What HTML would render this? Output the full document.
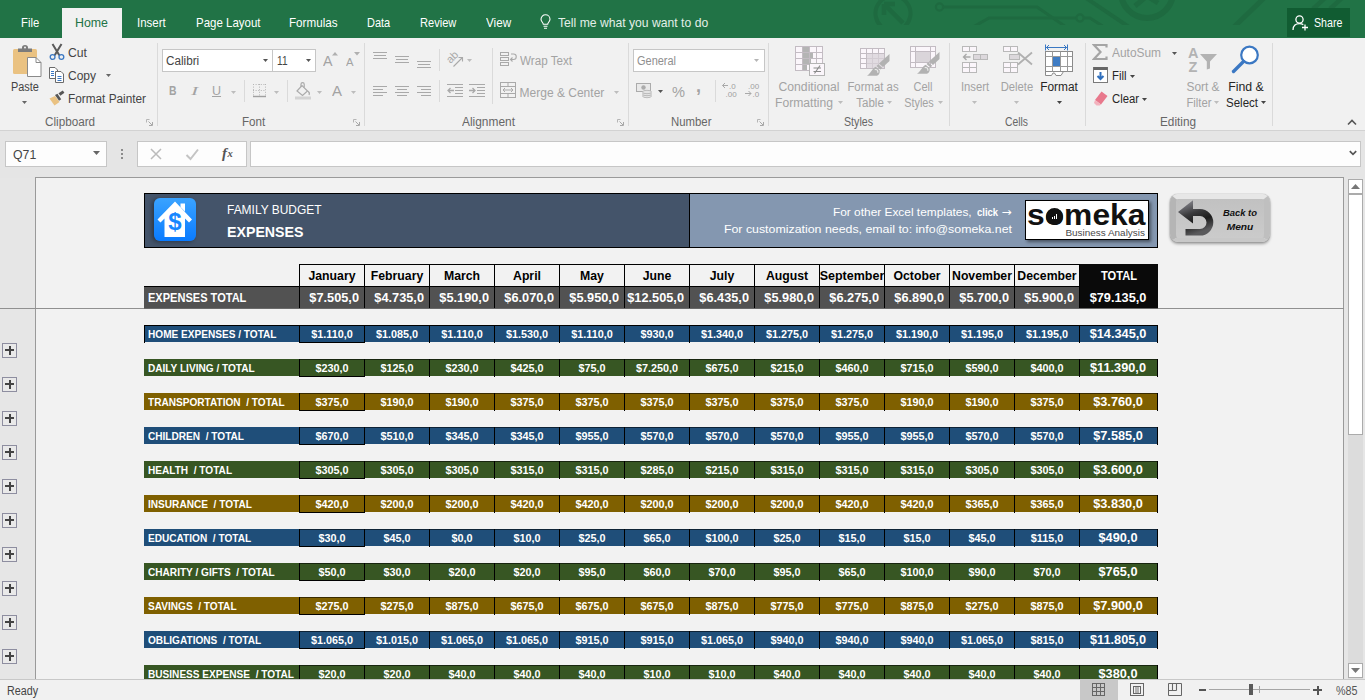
<!DOCTYPE html>
<html lang="en"><head><meta charset="utf-8"><title>Family Budget - Excel</title><style>
html,body{margin:0;padding:0}
body{width:1365px;height:700px;overflow:hidden;position:relative;background:#e6e6e6;font-family:"Liberation Sans",sans-serif;}
.a{position:absolute;box-sizing:border-box;display:block}
.t{position:absolute;white-space:pre;line-height:20px;}
</style></head><body>
<div class="a" style="left:0px;top:0px;width:1365px;height:38px;background:#217346;"></div>
<svg class="a" style="left:0;top:0" width="1365" height="25" viewBox="0 0 1365 25"><g fill="none" stroke="#1e6a40" stroke-width="3" stroke-linecap="butt">
<path d="M885 29 A17.5 17.5 0 1 1 901 29" stroke-width="4"/>
<path d="M903 23 L886 6 M884 4 v11 M884 4 h11" stroke-width="4.5"/>
<circle cx="939.5" cy="7" r="3.6" stroke-width="2.2"/>
<path d="M943.5 7 H1037 L1066 27"/>
<path d="M973 27 L989 18 H1076"/>
<circle cx="1080" cy="18" r="3.6" stroke-width="2.2"/>
<path d="M1084 18 H1090 L1104 27"/>
<path d="M1086 -2 L1129 27" stroke-width="4"/>
<circle cx="1147" cy="-8" r="26" stroke-width="6"/>
<path d="M1135 6 L1147 -4 L1158 3" stroke-width="5"/>
<path d="M1234 27 L1264 -2" stroke-width="5"/>
<path d="M1313 9 L1325 -2 M1330 9 L1342 -2" stroke-width="4.5"/>
</g></svg>
<div class="a" style="left:62px;top:8px;width:60px;height:30px;background:#f1f1f1;"></div>
<div class="t" style="top:13px;font-size:12.8px;color:#fff;left:21.1px;transform-origin:0 50%;transform:scaleX(0.882);">File</div>
<div class="t" style="top:13px;font-size:12.8px;color:#217346;left:75.2px;transform-origin:0 50%;transform:scaleX(0.966);">Home</div>
<div class="t" style="top:13px;font-size:12.8px;color:#fff;left:137px;transform-origin:0 50%;transform:scaleX(0.897);">Insert</div>
<div class="t" style="top:13px;font-size:12.8px;color:#fff;left:195.5px;transform-origin:0 50%;transform:scaleX(0.897);">Page Layout</div>
<div class="t" style="top:13px;font-size:12.8px;color:#fff;left:289.4px;transform-origin:0 50%;transform:scaleX(0.911);">Formulas</div>
<div class="t" style="top:13px;font-size:12.8px;color:#fff;left:367.4px;transform-origin:0 50%;transform:scaleX(0.858);">Data</div>
<div class="t" style="top:13px;font-size:12.8px;color:#fff;left:420.4px;transform-origin:0 50%;transform:scaleX(0.867);">Review</div>
<div class="t" style="top:13px;font-size:12.8px;color:#fff;left:486.1px;transform-origin:0 50%;transform:scaleX(0.912);">View</div>
<div class="t" style="top:13px;font-size:12.8px;color:#e3efe8;left:557.6px;transform-origin:0 50%;transform:scaleX(0.951);">Tell me what you want to do</div>
<svg class="a" style="left:539px;top:14px" width="13" height="16" viewBox="0 0 13 16"><g fill="none" stroke="#fff" stroke-width="1.1"><path d="M4.3 10.2 C4.3 8.6 2 7.6 2 5.2 A4.5 4.5 0 0 1 11 5.2 C11 7.6 8.7 8.6 8.7 10.2 Z"/><path d="M4.5 12.3 h4 M5 14.3 h3"/></g></svg>
<div class="a" style="left:1287px;top:8px;width:63px;height:29px;background:#115c32;"></div>
<svg class="a" style="left:1292px;top:14px" width="18" height="18" viewBox="0 0 18 18"><g fill="none" stroke="#fff" stroke-width="1.3"><circle cx="7.5" cy="5.5" r="3.6"/><path d="M1 16 C1 11.5 4 9.6 7.5 9.6 C9 9.6 10.3 10 11.3 10.6"/><path d="M13 10.5 v6 M10 13.5 h6"/></g></svg>
<div class="t" style="top:13px;font-size:12.8px;color:#fff;left:1313.6px;transform-origin:0 50%;transform:scaleX(0.831);">Share</div>
<div class="a" style="left:0px;top:38px;width:1365px;height:92px;background:#f1f1f1;"></div>
<div class="a" style="left:0px;top:130px;width:1365px;height:1px;background:#d2d2d2;"></div>
<div class="a" style="left:157px;top:43px;width:1px;height:83px;background:#dadada;"></div>
<div class="a" style="left:364px;top:43px;width:1px;height:83px;background:#dadada;"></div>
<div class="a" style="left:628px;top:43px;width:1px;height:83px;background:#dadada;"></div>
<div class="a" style="left:768px;top:43px;width:1px;height:83px;background:#dadada;"></div>
<div class="a" style="left:949px;top:43px;width:1px;height:83px;background:#dadada;"></div>
<div class="a" style="left:1085px;top:43px;width:1px;height:83px;background:#dadada;"></div>
<div class="a" style="left:1272px;top:43px;width:1px;height:83px;background:#dadada;"></div>
<svg class="a" style="left:12px;top:45px" width="30" height="32" viewBox="0 0 30 32"><rect x="1" y="4" width="24" height="25" rx="1.5" fill="#eac282"/>
<path d="M6 7V3.600H10V2.500A3 2.500 0 0 1 16 2.500V3.600H20V7Z" fill="#7b7b7b"/><circle cx="13" cy="2.600" r="1" fill="#f1f1f1"/>
<path d="M15.5 12.5H24L29 17.5V31.5H15.5Z" fill="#fff" stroke="#8a8a8a"/>
<path d="M24 12.5V17.5H29" fill="none" stroke="#8a8a8a"/></svg>
<div class="t" style="top:77px;font-size:12px;color:#444;left:11.4px;transform-origin:0 50%;transform:scaleX(0.909);">Paste</div>
<svg class="a" style="left:22.0px;top:101.0px" width="5" height="3" viewBox="0 0 5 3"><path d="M0 0H5L2.5 3Z" fill="#666"/></svg>
<svg class="a" style="left:48px;top:43px" width="18" height="18" viewBox="0 0 18 18"><g fill="none"><path d="M4.500 1L11.300 12.200M13.500 1L6.700 12.200" stroke="#5a5a5a" stroke-width="2"/>
<circle cx="4.6" cy="14" r="2.4" stroke="#3b78c3" stroke-width="1.3"/><circle cx="13.4" cy="14" r="2.4" stroke="#3b78c3" stroke-width="1.3"/></g></svg>
<div class="t" style="top:43px;font-size:12px;color:#444;left:68px;transform-origin:0 50%;transform:scaleX(1.017);">Cut</div>
<svg class="a" style="left:48px;top:66px" width="18" height="18" viewBox="0 0 18 18"><g fill="#fff" stroke="#6a6a6a"><path d="M1.5 1.5H7L9.5 4V12.5H1.5Z"/><path d="M7.5 5.5H13L15.5 8V16.5H7.5Z"/></g>
<g stroke="#3b78c3"><path d="M3 5.5h3M3 7.5h3M3 9.5h3M9.5 10.5h4M9.5 12.5h4M9.5 14.5h4"/></g></svg>
<div class="t" style="top:66px;font-size:12px;color:#444;left:68px;transform-origin:0 50%;">Copy</div>
<svg class="a" style="left:105.5px;top:74.0px" width="5" height="3" viewBox="0 0 5 3"><path d="M0 0H5L2.5 3Z" fill="#666"/></svg>
<svg class="a" style="left:48px;top:89px" width="18" height="18" viewBox="0 0 18 18"><path d="M1.5 9.5L7 7L11.5 13L6.5 16.5Z" fill="#eac282"/><path d="M7 6L9.5 4.8L13.2 10.2L11 11.8Z" fill="#555"/><path d="M10.5 4.2L14.8 1.6L16.4 3.8L12.4 6.8Z" fill="#555"/></svg>
<div class="t" style="top:89px;font-size:12px;color:#444;left:68px;transform-origin:0 50%;transform:scaleX(0.983);">Format Painter</div>
<div class="t" style="top:112px;font-size:12px;color:#666;left:45.4px;transform-origin:0 50%;transform:scaleX(0.975);">Clipboard</div>
<svg class="a" style="left:146px;top:119px" width="7" height="7" viewBox="0 0 7 7"><path d="M0.500 3.500V0.500H3.500" fill="none" stroke="#b5b5b5"/><path d="M2.500 2.500L6 6M6.500 3V6.500H3" fill="none" stroke="#a8a8a8" stroke-width="1"/></svg>
<div class="a" style="left:162px;top:49px;width:111px;height:23px;background:#fff;border:1px solid #c6c6c6;"></div>
<div class="a" style="left:272px;top:49px;width:44px;height:23px;background:#fff;border:1px solid #c6c6c6;"></div>
<div class="t" style="top:51px;font-size:12px;color:#444;left:165.5px;transform-origin:0 50%;transform:scaleX(0.976);">Calibri</div>
<svg class="a" style="left:262.8px;top:59.0px" width="5" height="3" viewBox="0 0 5 3"><path d="M0 0H5L2.5 3Z" fill="#555"/></svg>
<div class="t" style="top:51px;font-size:12px;color:#444;left:277px;transform-origin:0 50%;transform:scaleX(0.843);">11</div>
<svg class="a" style="left:305.9px;top:59.0px" width="5" height="3" viewBox="0 0 5 3"><path d="M0 0H5L2.5 3Z" fill="#555"/></svg>
<div class="t" style="top:51px;font-size:14px;color:#a3a3a3;left:322.5px;transform-origin:0 50%;transform:scaleX(1.017);">A</div>
<svg class="a" style="left:332px;top:52px" width="6" height="4" viewBox="0 0 6 4"><path d="M0 3.5H6L3 0Z" fill="#b0b0b0"/></svg>
<div class="t" style="top:52px;font-size:11.5px;color:#a3a3a3;left:345.5px;transform-origin:0 50%;transform:scaleX(0.978);">A</div>
<svg class="a" style="left:354px;top:52px" width="6" height="4" viewBox="0 0 6 4"><path d="M0 0H6L3 3.5Z" fill="#b0b0b0"/></svg>
<div class="t" style="top:81px;font-size:12.5px;color:#a3a3a3;font-weight:bold;left:168.5px;transform-origin:0 50%;transform:scaleX(0.831);">B</div>
<div class="t" style="top:81px;font-size:12.5px;color:#a3a3a3;font-style:italic;left:191px;transform-origin:0 50%;transform:scaleX(1.728);font-family:'Liberation Serif',serif;">I</div>
<div class="t" style="top:81px;font-size:12.5px;color:#a3a3a3;left:212px;transform-origin:0 50%;text-decoration:underline;">U</div>
<svg class="a" style="left:230.5px;top:90.5px" width="5" height="3" viewBox="0 0 5 3"><path d="M0 0H5L2.5 3Z" fill="#bdbdbd"/></svg>
<div class="a" style="left:244px;top:80px;width:1px;height:22px;background:#dadada;"></div>
<svg class="a" style="left:252px;top:83px" width="15" height="15" viewBox="0 0 15 15"><g stroke="#b5b5b5" stroke-dasharray="1 1.6" fill="none"><path d="M1 1.5h13M1 7.5h13M1.5 1v12M7.5 1v12M13.5 1v12"/></g><path d="M1 13.5h13" stroke="#a0a0a0" stroke-width="1.4"/></svg>
<svg class="a" style="left:273.5px;top:90.5px" width="5" height="3" viewBox="0 0 5 3"><path d="M0 0H5L2.5 3Z" fill="#bdbdbd"/></svg>
<div class="a" style="left:287px;top:80px;width:1px;height:22px;background:#dadada;"></div>
<svg class="a" style="left:294px;top:82px" width="18" height="18" viewBox="0 0 18 18"><g fill="none" stroke="#ababab" stroke-width="1.2"><path d="M3 9L8 3.5L13.5 9L8.5 13.5Z"/><path d="M7 5V2.2A1.6 1.6 0 0 1 10.2 2.2V5.5"/><path d="M13.5 9C15.5 10 15.5 12 15 13"/></g><rect x="1" y="14.5" width="16" height="3" fill="#d3d3d3"/></svg>
<svg class="a" style="left:316.5px;top:90.5px" width="5" height="3" viewBox="0 0 5 3"><path d="M0 0H5L2.5 3Z" fill="#bdbdbd"/></svg>
<div class="t" style="top:81px;font-size:14.5px;color:#a3a3a3;left:332px;transform-origin:0 50%;transform:scaleX(1.034);">A</div>
<svg class="a" style="left:350.5px;top:90.5px" width="5" height="3" viewBox="0 0 5 3"><path d="M0 0H5L2.5 3Z" fill="#bdbdbd"/></svg>
<div class="t" style="top:112px;font-size:12px;color:#666;left:241.5px;transform-origin:0 50%;transform:scaleX(0.970);">Font</div>
<svg class="a" style="left:353px;top:119px" width="7" height="7" viewBox="0 0 7 7"><path d="M0.500 3.500V0.500H3.500" fill="none" stroke="#b5b5b5"/><path d="M2.500 2.500L6 6M6.500 3V6.500H3" fill="none" stroke="#a8a8a8" stroke-width="1"/></svg>
<svg class="a" style="left:373px;top:52px" width="17" height="14" viewBox="0 0 17 14"><path d="M0 0.5H14" stroke="#a9a9a9"/><path d="M1 3.5H13" stroke="#a9a9a9"/><path d="M0 6.5H14" stroke="#a9a9a9"/></svg>
<svg class="a" style="left:395px;top:56px" width="17" height="14" viewBox="0 0 17 14"><path d="M0 0.5H14" stroke="#a9a9a9"/><path d="M1 3.5H13" stroke="#a9a9a9"/><path d="M0 6.5H14" stroke="#a9a9a9"/></svg>
<svg class="a" style="left:417px;top:61px" width="17" height="14" viewBox="0 0 17 14"><path d="M0 0.5H14" stroke="#a9a9a9"/><path d="M1 3.5H13" stroke="#a9a9a9"/><path d="M0 6.5H14" stroke="#a9a9a9"/></svg>
<div class="a" style="left:439px;top:49px;width:1px;height:22px;background:#dadada;"></div>
<svg class="a" style="left:444px;top:49px" width="22" height="20" viewBox="0 0 22 20"><path d="M9.500 17.500L18.500 8.500M14.500 8.500h4v4" fill="none" stroke="#a9a9a9" stroke-width="1.100"/><text x="0" y="0" font-size="11" fill="#a9a9a9" transform="translate(6.500 15) rotate(-45)" font-family="Liberation Sans,sans-serif">ab</text></svg>
<svg class="a" style="left:467.0px;top:59.0px" width="5" height="3" viewBox="0 0 5 3"><path d="M0 0H5L2.5 3Z" fill="#bdbdbd"/></svg>
<div class="a" style="left:492px;top:48px;width:1px;height:56px;background:#dadada;"></div>
<svg class="a" style="left:500px;top:51px" width="17" height="17" viewBox="0 0 17 17"><g fill="none" stroke="#a9a9a9"><rect x="0.5" y="1.500" width="8" height="3"/><rect x="0.5" y="6.500" width="8" height="3"/><rect x="0.5" y="11.500" width="8" height="3"/><path d="M11 3h2.500a2.500 2.500 0 0 1 0 5.500H10.500M12.500 6.500l-2 2 2 2" stroke-width="1.100"/></g></svg>
<div class="t" style="top:51px;font-size:12px;color:#a3a3a3;left:519.6px;transform-origin:0 50%;transform:scaleX(0.972);">Wrap Text</div>
<svg class="a" style="left:373px;top:86px" width="17" height="14" viewBox="0 0 17 14"><path d="M0 0.5H14" stroke="#a9a9a9"/><path d="M0 3.5H10" stroke="#a9a9a9"/><path d="M0 6.5H14" stroke="#a9a9a9"/><path d="M0 9.5H10" stroke="#a9a9a9"/></svg>
<svg class="a" style="left:395px;top:86px" width="17" height="14" viewBox="0 0 17 14"><path d="M0 0.5H14" stroke="#a9a9a9"/><path d="M2 3.5H12" stroke="#a9a9a9"/><path d="M0 6.5H14" stroke="#a9a9a9"/><path d="M2 9.5H12" stroke="#a9a9a9"/></svg>
<svg class="a" style="left:417px;top:86px" width="17" height="14" viewBox="0 0 17 14"><path d="M0 0.5H14" stroke="#a9a9a9"/><path d="M4 3.5H14" stroke="#a9a9a9"/><path d="M0 6.5H14" stroke="#a9a9a9"/><path d="M4 9.5H14" stroke="#a9a9a9"/></svg>
<div class="a" style="left:439px;top:80px;width:1px;height:22px;background:#dadada;"></div>
<svg class="a" style="left:447px;top:84px" width="17" height="14" viewBox="0 0 17 14"><path d="M0 0.5H16" stroke="#a9a9a9"/><path d="M8 3.5H16" stroke="#a9a9a9"/><path d="M8 6.5H16" stroke="#a9a9a9"/><path d="M8 9.5H16" stroke="#a9a9a9"/><path d="M0 12.5H16" stroke="#a9a9a9"/></svg>
<svg class="a" style="left:447px;top:87px" width="8" height="8" viewBox="0 0 8 8"><path d="M7 3.500H1M3.500 1L1 3.500L3.500 6" fill="none" stroke="#a9a9a9" stroke-width="1.300"/></svg>
<svg class="a" style="left:469px;top:84px" width="17" height="14" viewBox="0 0 17 14"><path d="M0 0.5H16" stroke="#a9a9a9"/><path d="M8 3.5H16" stroke="#a9a9a9"/><path d="M8 6.5H16" stroke="#a9a9a9"/><path d="M8 9.5H16" stroke="#a9a9a9"/><path d="M0 12.5H16" stroke="#a9a9a9"/></svg>
<svg class="a" style="left:469px;top:87px" width="8" height="8" viewBox="0 0 8 8"><path d="M0 3.500H6M3.500 1L6 3.500L3.500 6" fill="none" stroke="#a9a9a9" stroke-width="1.300"/></svg>
<svg class="a" style="left:500px;top:82px" width="17" height="17" viewBox="0 0 17 17"><g fill="none" stroke="#a9a9a9"><rect x="0.5" y="0.5" width="15" height="15"/><path d="M0.500 4.500H15.500M0.500 11.500H15.500M8 0.500V4.500M8 11.500V15.500M3 8H13M5 6L3 8L5 10M11 6L13 8L11 10"/></g></svg>
<div class="t" style="top:83px;font-size:12px;color:#a3a3a3;left:519.6px;transform-origin:0 50%;">Merge &amp; Center</div>
<svg class="a" style="left:614.0px;top:90.5px" width="5" height="3" viewBox="0 0 5 3"><path d="M0 0H5L2.5 3Z" fill="#bdbdbd"/></svg>
<div class="t" style="top:112px;font-size:12px;color:#666;left:462px;transform-origin:0 50%;transform:scaleX(0.993);">Alignment</div>
<svg class="a" style="left:617px;top:119px" width="7" height="7" viewBox="0 0 7 7"><path d="M0.500 3.500V0.500H3.500" fill="none" stroke="#b5b5b5"/><path d="M2.500 2.500L6 6M6.500 3V6.500H3" fill="none" stroke="#a8a8a8" stroke-width="1"/></svg>
<div class="a" style="left:633px;top:49px;width:132px;height:23px;background:#fff;border:1px solid #c6c6c6;"></div>
<div class="t" style="top:51px;font-size:12px;color:#8f8f8f;left:637px;transform-origin:0 50%;transform:scaleX(0.914);">General</div>
<svg class="a" style="left:753.5px;top:59.0px" width="5" height="3" viewBox="0 0 5 3"><path d="M0 0H5L2.5 3Z" fill="#b5b5b5"/></svg>
<svg class="a" style="left:635px;top:82px" width="19" height="17" viewBox="0 0 19 17"><rect x="1.5" y="1.500" width="14" height="8" fill="#e9e9e9" stroke="#ababab"/><circle cx="8.5" cy="5.5" r="2.2" fill="#ababab"/><g fill="#e4e4e4" stroke="#b0b0b0" stroke-width="0.8"><ellipse cx="12" cy="14" rx="4.5" ry="1.7"/><ellipse cx="12" cy="12" rx="4.5" ry="1.7"/><ellipse cx="12" cy="10" rx="4.5" ry="1.7"/></g></svg>
<svg class="a" style="left:657.5px;top:89.5px" width="5" height="3" viewBox="0 0 5 3"><path d="M0 0H5L2.5 3Z" fill="#555"/></svg>
<div class="t" style="top:82px;font-size:14px;color:#a3a3a3;left:672px;transform-origin:0 50%;transform:scaleX(1.044);">%</div>
<div class="t" style="top:76px;font-size:18px;color:#a3a3a3;font-weight:bold;left:696px;transform-origin:0 50%;">,</div>
<div class="a" style="left:715px;top:80px;width:1px;height:22px;background:#dadada;"></div>
<svg class="a" style="left:722px;top:82px" width="17" height="16" viewBox="0 0 17 16"><path d="M0.500 3.500H6M3 1L0.500 3.500L3 6" fill="none" stroke="#a9a9a9"/><text x="7" y="6.500" font-size="8" fill="#a0a0a0" font-family="Liberation Sans,sans-serif">.0</text><text x="3.500" y="14.500" font-size="8" fill="#a0a0a0" font-family="Liberation Sans,sans-serif">.00</text></svg>
<svg class="a" style="left:744px;top:82px" width="17" height="16" viewBox="0 0 17 16"><path d="M1 11.500H7M4.500 9L7 11.500L4.500 14" fill="none" stroke="#a9a9a9"/><text x="4" y="6.500" font-size="8" fill="#a0a0a0" font-family="Liberation Sans,sans-serif">.00</text><text x="8.500" y="14.500" font-size="8" fill="#a0a0a0" font-family="Liberation Sans,sans-serif">.0</text></svg>
<div class="t" style="top:112px;font-size:12px;color:#666;left:670.6px;transform-origin:0 50%;transform:scaleX(0.947);">Number</div>
<svg class="a" style="left:757px;top:119px" width="7" height="7" viewBox="0 0 7 7"><path d="M0.500 3.500V0.500H3.500" fill="none" stroke="#b5b5b5"/><path d="M2.500 2.500L6 6M6.500 3V6.500H3" fill="none" stroke="#a8a8a8" stroke-width="1"/></svg>
<svg class="a" style="left:795px;top:46px" width="32" height="32" viewBox="0 0 32 32"><rect x="0.5" y="0.5" width="27" height="24" fill="#fbf6fb" stroke="#c3bcc3"/><rect x="7" y="1" width="7" height="6" fill="#b4b4b4"/><rect x="7" y="7" width="11" height="6" fill="#b4b4b4"/><rect x="7" y="13" width="9" height="6" fill="#b4b4b4"/><rect x="7" y="19" width="5" height="5" fill="#b4b4b4"/><path d="M7.5 0.5v24" stroke="#c3bcc3"/><path d="M14.5 0.5v24" stroke="#c3bcc3"/><path d="M21.5 0.5v24" stroke="#c3bcc3"/><path d="M0.5 6.5h27" stroke="#c3bcc3"/><path d="M0.5 12.5h27" stroke="#c3bcc3"/><path d="M0.5 18.5h27" stroke="#c3bcc3"/><rect x="14.500" y="17.500" width="15" height="12" fill="#fbf6fb" stroke="#b4b4b4"/><path d="M18.500 22h7.500M18.500 25.500h7.500M25 19.500L19.500 27.500" stroke="#8a8a8a" stroke-width="1.100" fill="none"/></svg>
<div class="t" style="top:77px;font-size:12px;color:#a3a3a3;left:609.1px;width:400px;text-align:center;transform-origin:50% 50%;transform:scaleX(1.016);">Conditional</div>
<div class="t" style="top:93px;font-size:12px;color:#a3a3a3;left:604.4px;width:400px;text-align:center;transform-origin:50% 50%;transform:scaleX(1.011);">Formatting</div>
<svg class="a" style="left:838.0px;top:101.0px" width="5" height="3" viewBox="0 0 5 3"><path d="M0 0H5L2.5 3Z" fill="#bdbdbd"/></svg>
<svg class="a" style="left:860px;top:46px" width="34" height="32" viewBox="0 0 34 32"><rect x="0.5" y="2.5" width="24" height="20" fill="#fbf6fb" stroke="#c3bcc3"/><path d="M6.5 2.5v20" stroke="#c3bcc3"/><path d="M12.5 2.5v20" stroke="#c3bcc3"/><path d="M18.5 2.5v20" stroke="#c3bcc3"/><path d="M0.5 7.5h24" stroke="#c3bcc3"/><path d="M0.5 12.5h24" stroke="#c3bcc3"/><path d="M0.5 17.5h24" stroke="#c3bcc3"/><rect x="7" y="8" width="17" height="14" fill="#d8d2d8" opacity="0.75"/><g transform="translate(29.5 8)" fill="#b2b2b2"><path d="M0 0L0 7L-6.500 13L-10.500 9.500Z"/><path d="M-11.300 10.300L-7.300 13.800L-9 15.500L-13 12Z"/><path d="M-13.800 12.800L-9.800 16.300C-9.500 19 -10.500 21 -12.500 21.800L-22.500 21.800C-18.500 19.500 -17.500 14.500 -13.800 12.800Z"/><path d="M-14.800 15.800C-12.800 14.800 -11 16.800 -11.800 18.800" stroke="#ececec" stroke-width="1.200" fill="none"/></g></svg>
<div class="t" style="top:77px;font-size:12px;color:#a3a3a3;left:673px;width:400px;text-align:center;transform-origin:50% 50%;transform:scaleX(0.948);">Format as</div>
<div class="t" style="top:93px;font-size:12px;color:#a3a3a3;left:670.2px;width:400px;text-align:center;transform-origin:50% 50%;transform:scaleX(0.962);">Table</div>
<svg class="a" style="left:887.0px;top:101.0px" width="5" height="3" viewBox="0 0 5 3"><path d="M0 0H5L2.5 3Z" fill="#bdbdbd"/></svg>
<svg class="a" style="left:910px;top:46px" width="34" height="32" viewBox="0 0 34 32"><rect x="0.5" y="0.5" width="25" height="21" fill="#fbf6fb" stroke="#c3bcc3"/><path d="M5.5 0.5v21" stroke="#c3bcc3"/><path d="M20.5 0.5v21" stroke="#c3bcc3"/><path d="M0.5 5.5h25" stroke="#c3bcc3"/><path d="M0.5 16.5h25" stroke="#c3bcc3"/><rect x="6" y="6" width="14" height="10" fill="#dad5da"/><g transform="translate(29.5 6)" fill="#b2b2b2"><path d="M0 0L0 7L-6.500 13L-10.500 9.500Z"/><path d="M-11.300 10.300L-7.300 13.800L-9 15.500L-13 12Z"/><path d="M-13.800 12.800L-9.800 16.300C-9.500 19 -10.500 21 -12.500 21.800L-22.500 21.800C-18.500 19.500 -17.500 14.500 -13.800 12.800Z"/><path d="M-14.800 15.800C-12.800 14.800 -11 16.800 -11.800 18.800" stroke="#ececec" stroke-width="1.200" fill="none"/></g></svg>
<div class="t" style="top:77px;font-size:12px;color:#a3a3a3;left:723px;width:400px;text-align:center;transform-origin:50% 50%;transform:scaleX(0.919);">Cell</div>
<div class="t" style="top:93px;font-size:12px;color:#a3a3a3;left:719px;width:400px;text-align:center;transform-origin:50% 50%;transform:scaleX(0.906);">Styles</div>
<svg class="a" style="left:938.0px;top:101.0px" width="5" height="3" viewBox="0 0 5 3"><path d="M0 0H5L2.5 3Z" fill="#bdbdbd"/></svg>
<div class="t" style="top:112px;font-size:12px;color:#666;left:844px;transform-origin:0 50%;transform:scaleX(0.887);">Styles</div>
<svg class="a" style="left:962px;top:46px" width="28" height="28" viewBox="0 0 28 28"><g fill="#fbf6fb" stroke="#b9b9b9"><rect x="0.5" y="0.5" width="7" height="5"/><rect x="7.5" y="0.5" width="7" height="5"/><rect x="11.500" y="8.500" width="7" height="5" fill="#dcd8dc"/><rect x="18.500" y="8.500" width="7" height="5" fill="#dcd8dc"/><rect x="0.5" y="16.500" width="7" height="5"/><rect x="7.5" y="16.500" width="7" height="5"/><rect x="0.5" y="21.500" width="7" height="5"/><rect x="7.5" y="21.500" width="7" height="5"/></g><path d="M8.500 11H1.500M4.500 8L1.500 11L4.500 14" fill="none" stroke="#a9a9a9" stroke-width="1.400"/></svg>
<div class="t" style="top:77px;font-size:12px;color:#a3a3a3;left:774.5px;width:400px;text-align:center;transform-origin:50% 50%;transform:scaleX(0.940);">Insert</div>
<svg class="a" style="left:972.0px;top:101.0px" width="5" height="3" viewBox="0 0 5 3"><path d="M0 0H5L2.5 3Z" fill="#bdbdbd"/></svg>
<svg class="a" style="left:1002px;top:46px" width="32" height="28" viewBox="0 0 32 28"><g fill="#fbf6fb" stroke="#b9b9b9"><rect x="1.500" y="0.500" width="7" height="5"/><rect x="8.500" y="0.500" width="7" height="5"/><rect x="7.500" y="8.500" width="10" height="5" fill="#dcd8dc"/><rect x="1.500" y="16.500" width="7" height="5"/><rect x="8.500" y="16.500" width="7" height="5"/><rect x="1.500" y="21.500" width="7" height="5"/><rect x="8.500" y="21.500" width="7" height="5"/></g><path d="M16 6.500L30 18.500M30 6.500L16 18.500" fill="none" stroke="#b0b0b0" stroke-width="1.800"/></svg>
<div class="t" style="top:77px;font-size:12px;color:#a3a3a3;left:816.7px;width:400px;text-align:center;transform-origin:50% 50%;transform:scaleX(0.937);">Delete</div>
<svg class="a" style="left:1014.0px;top:101.0px" width="5" height="3" viewBox="0 0 5 3"><path d="M0 0H5L2.5 3Z" fill="#bdbdbd"/></svg>
<svg class="a" style="left:1044px;top:44px" width="32" height="32" viewBox="0 0 32 32"><g fill="none" stroke="#3b78c3" stroke-width="1"><path d="M2 3.500H23M1.500 0.500V6.500M23.500 0.500V6.500M5 1L2.500 3.500L5 6M20 1L22.500 3.500L20 6"/></g><path d="M1.500 27.500V31.500H7.500L9 29H10.500L12 31.500H17L19.500 27.500Z" fill="#fff" stroke="#8a8a8a"/><rect x="1.500" y="7.500" width="27" height="20" fill="#fff" stroke="#8a8a8a"/><g stroke="#9a9a9a" fill="none"><path d="M8.500 7.500V27.500M16.500 7.500V27.500M23.500 7.500V27.500M1.500 12.500H28.500M1.500 22.500H28.500"/></g><rect x="9" y="13" width="7" height="9" fill="#3e7cc4"/></svg>
<div class="t" style="top:77px;font-size:12px;color:#262626;left:859.2px;width:400px;text-align:center;transform-origin:50% 50%;transform:scaleX(0.989);">Format</div>
<svg class="a" style="left:1057.0px;top:101.0px" width="5" height="3" viewBox="0 0 5 3"><path d="M0 0H5L2.5 3Z" fill="#444"/></svg>
<div class="t" style="top:112px;font-size:12px;color:#666;left:1005px;transform-origin:0 50%;transform:scaleX(0.862);">Cells</div>
<svg class="a" style="left:1092px;top:43px" width="18" height="18" viewBox="0 0 18 18"><path d="M14.500 4.500V2H2L8.500 9L2 16H14.500V13.500" fill="none" stroke="#a5a5a5" stroke-width="2.200"/></svg>
<div class="t" style="top:43px;font-size:12px;color:#a3a3a3;left:1111.9px;transform-origin:0 50%;transform:scaleX(0.993);">AutoSum</div>
<svg class="a" style="left:1171.5px;top:51.5px" width="5" height="3" viewBox="0 0 5 3"><path d="M0 0H5L2.5 3Z" fill="#555"/></svg>
<svg class="a" style="left:1093px;top:66px" width="16" height="18" viewBox="0 0 16 18"><rect x="0.5" y="1.500" width="14" height="15" fill="#fff" stroke="#7a7a7a"/><rect x="0.5" y="1" width="14" height="3" fill="#666"/><path d="M7.500 6V13M4.500 10L7.500 13L10.500 10" fill="none" stroke="#2f6fbd" stroke-width="2"/></svg>
<div class="t" style="top:66px;font-size:12px;color:#262626;left:1112px;transform-origin:0 50%;transform:scaleX(0.946);">Fill</div>
<svg class="a" style="left:1130.0px;top:74.5px" width="5" height="3" viewBox="0 0 5 3"><path d="M0 0H5L2.5 3Z" fill="#444"/></svg>
<svg class="a" style="left:1093px;top:90px" width="17" height="16" viewBox="0 0 17 16"><path d="M8.500 1.500L14.500 6L8 14.500L2 10Z" fill="#e8788c"/><path d="M2 10L8 14.500L6.800 15.500H3.500L1 13Z" fill="#f3b2bd"/></svg>
<div class="t" style="top:89px;font-size:12px;color:#262626;left:1112px;transform-origin:0 50%;transform:scaleX(0.942);">Clear</div>
<svg class="a" style="left:1142.0px;top:97.5px" width="5" height="3" viewBox="0 0 5 3"><path d="M0 0H5L2.5 3Z" fill="#444"/></svg>
<svg class="a" style="left:1187px;top:45px" width="32" height="30" viewBox="0 0 32 30"><text x="1" y="13" font-size="14.500" font-weight="bold" fill="#b3b3b3" font-family="Liberation Sans,sans-serif">A</text><text x="1.500" y="27" font-size="14.500" font-weight="bold" fill="#b3b3b3" font-family="Liberation Sans,sans-serif">Z</text><path d="M13 9H30L23 16.500V23.500L19.800 24.500V16.500Z" fill="#b3b3b3"/></svg>
<div class="t" style="top:77px;font-size:12px;color:#a3a3a3;left:1002.5px;width:400px;text-align:center;transform-origin:50% 50%;transform:scaleX(0.990);">Sort &amp;</div>
<div class="t" style="top:93px;font-size:12px;color:#a3a3a3;left:998.5px;width:400px;text-align:center;transform-origin:50% 50%;transform:scaleX(0.938);">Filter</div>
<svg class="a" style="left:1214.0px;top:101.0px" width="5" height="3" viewBox="0 0 5 3"><path d="M0 0H5L2.5 3Z" fill="#bdbdbd"/></svg>
<svg class="a" style="left:1230px;top:44px" width="32" height="32" viewBox="0 0 32 32"><circle cx="19.500" cy="11" r="8.300" fill="#fff" stroke="#3b78c3" stroke-width="2.200"/><path d="M13.500 17.500L3.500 27.500" stroke="#3b78c3" stroke-width="3.400" stroke-linecap="round"/></svg>
<div class="t" style="top:77px;font-size:12px;color:#262626;left:1046.2px;width:400px;text-align:center;transform-origin:50% 50%;transform:scaleX(1.026);">Find &amp;</div>
<div class="t" style="top:93px;font-size:12px;color:#262626;left:1042px;width:400px;text-align:center;transform-origin:50% 50%;transform:scaleX(0.959);">Select</div>
<svg class="a" style="left:1261.0px;top:101.0px" width="5" height="3" viewBox="0 0 5 3"><path d="M0 0H5L2.5 3Z" fill="#444"/></svg>
<div class="t" style="top:112px;font-size:12px;color:#666;left:1160px;transform-origin:0 50%;transform:scaleX(0.981);">Editing</div>
<svg class="a" style="left:1346.5px;top:118.5px" width="10" height="7" viewBox="0 0 10 7"><path d="M1 5.500L5 1.500L9 5.500" fill="none" stroke="#555" stroke-width="1.600"/></svg>
<div class="a" style="left:0px;top:131px;width:1365px;height:47px;background:#e5e5e5;"></div>
<div class="a" style="left:5px;top:141px;width:102px;height:26px;background:#fdfdfd;border:1px solid #c6c6c6;"></div>
<div class="t" style="top:145px;font-size:12px;color:#444;left:12.5px;transform-origin:0 50%;transform:scaleX(1.023);">Q71</div>
<svg class="a" style="left:93.0px;top:151.0px" width="7" height="4" viewBox="0 0 7 4"><path d="M0 0H7L3.5 4Z" fill="#666"/></svg>
<div class="a" style="left:121px;top:149px;width:2px;height:2px;background:#8c8c8c;"></div>
<div class="a" style="left:121px;top:153px;width:2px;height:2px;background:#8c8c8c;"></div>
<div class="a" style="left:121px;top:157px;width:2px;height:2px;background:#8c8c8c;"></div>
<div class="a" style="left:137px;top:141px;width:110px;height:26px;background:#fdfdfd;border:1px solid #c6c6c6;"></div>
<svg class="a" style="left:150px;top:148px" width="12" height="12" viewBox="0 0 12 12"><path d="M1 1L11 11M11 1L1 11" stroke="#bbb" stroke-width="1.500" fill="none"/></svg>
<svg class="a" style="left:185px;top:148px" width="15" height="13" viewBox="0 0 15 13"><path d="M1.500 7L5.500 11L13 1.500" stroke="#c4c4c4" stroke-width="2" fill="none"/></svg>
<div class="t" style="top:143px;font-size:15px;color:#555;font-weight:bold;font-style:italic;left:222px;transform-origin:0 50%;font-family:'Liberation Serif',serif;">f</div>
<div class="t" style="top:144px;font-size:10.5px;color:#555;font-weight:bold;font-style:italic;left:227.5px;transform-origin:0 50%;font-family:'Liberation Serif',serif;">x</div>
<div class="a" style="left:250px;top:141px;width:1111px;height:26px;background:#fdfdfd;border:1px solid #c6c6c6;"></div>
<svg class="a" style="left:1349px;top:150px" width="8" height="6" viewBox="0 0 8 6"><path d="M0.800 1.200L4 4.400L7.200 1.200" fill="none" stroke="#555" stroke-width="1.700"/></svg>
<div class="a" style="left:36px;top:178px;width:1307px;height:501px;background:#f2f2f2;"></div>
<div class="a" style="left:35px;top:177px;width:1309px;height:1px;background:#9a9a9a;"></div>
<div class="a" style="left:35px;top:177px;width:1px;height:502px;background:#9a9a9a;"></div>
<div class="a" style="left:1343px;top:177px;width:1px;height:502px;background:#9a9a9a;"></div>
<div class="a" style="left:0px;top:308px;width:1344px;height:1px;background:#909090;"></div>
<div class="a" style="left:2px;top:343px;width:15px;height:15px;background:#e9e9e9;border:1px solid #8e8ea0;"></div>
<div class="a" style="left:5px;top:349px;width:9px;height:2px;background:#444;"></div>
<div class="a" style="left:8.5px;top:346px;width:2px;height:9px;background:#444;"></div>
<div class="a" style="left:2px;top:377px;width:15px;height:15px;background:#e9e9e9;border:1px solid #8e8ea0;"></div>
<div class="a" style="left:5px;top:383px;width:9px;height:2px;background:#444;"></div>
<div class="a" style="left:8.5px;top:380px;width:2px;height:9px;background:#444;"></div>
<div class="a" style="left:2px;top:411px;width:15px;height:15px;background:#e9e9e9;border:1px solid #8e8ea0;"></div>
<div class="a" style="left:5px;top:417px;width:9px;height:2px;background:#444;"></div>
<div class="a" style="left:8.5px;top:414px;width:2px;height:9px;background:#444;"></div>
<div class="a" style="left:2px;top:445px;width:15px;height:15px;background:#e9e9e9;border:1px solid #8e8ea0;"></div>
<div class="a" style="left:5px;top:451px;width:9px;height:2px;background:#444;"></div>
<div class="a" style="left:8.5px;top:448px;width:2px;height:9px;background:#444;"></div>
<div class="a" style="left:2px;top:479px;width:15px;height:15px;background:#e9e9e9;border:1px solid #8e8ea0;"></div>
<div class="a" style="left:5px;top:485px;width:9px;height:2px;background:#444;"></div>
<div class="a" style="left:8.5px;top:482px;width:2px;height:9px;background:#444;"></div>
<div class="a" style="left:2px;top:513px;width:15px;height:15px;background:#e9e9e9;border:1px solid #8e8ea0;"></div>
<div class="a" style="left:5px;top:519px;width:9px;height:2px;background:#444;"></div>
<div class="a" style="left:8.5px;top:516px;width:2px;height:9px;background:#444;"></div>
<div class="a" style="left:2px;top:547px;width:15px;height:15px;background:#e9e9e9;border:1px solid #8e8ea0;"></div>
<div class="a" style="left:5px;top:553px;width:9px;height:2px;background:#444;"></div>
<div class="a" style="left:8.5px;top:550px;width:2px;height:9px;background:#444;"></div>
<div class="a" style="left:2px;top:581px;width:15px;height:15px;background:#e9e9e9;border:1px solid #8e8ea0;"></div>
<div class="a" style="left:5px;top:587px;width:9px;height:2px;background:#444;"></div>
<div class="a" style="left:8.5px;top:584px;width:2px;height:9px;background:#444;"></div>
<div class="a" style="left:2px;top:615px;width:15px;height:15px;background:#e9e9e9;border:1px solid #8e8ea0;"></div>
<div class="a" style="left:5px;top:621px;width:9px;height:2px;background:#444;"></div>
<div class="a" style="left:8.5px;top:618px;width:2px;height:9px;background:#444;"></div>
<div class="a" style="left:2px;top:649px;width:15px;height:15px;background:#e9e9e9;border:1px solid #8e8ea0;"></div>
<div class="a" style="left:5px;top:655px;width:9px;height:2px;background:#444;"></div>
<div class="a" style="left:8.5px;top:652px;width:2px;height:9px;background:#444;"></div>
<div class="a" style="left:1348px;top:179px;width:15px;height:500px;background:#dcdcdc;"></div>
<div class="a" style="left:1348px;top:179px;width:15px;height:15px;background:#fff;border:1px solid #ababab;"></div>
<svg class="a" style="left:1351px;top:184px" width="9" height="5" viewBox="0 0 9 5"><path d="M0 5H9L4.500 0Z" fill="#777"/></svg>
<div class="a" style="left:1348px;top:194px;width:15px;height:241px;background:#fff;border:1px solid #ababab;"></div>
<div class="a" style="left:1348px;top:663px;width:15px;height:15px;background:#fff;border:1px solid #ababab;"></div>
<svg class="a" style="left:1351px;top:668px" width="9" height="5" viewBox="0 0 9 5"><path d="M0 0H9L4.500 5Z" fill="#777"/></svg>
<div class="a" style="left:144px;top:193px;width:1014px;height:55px;background:#44546a;border:1px solid #000;"></div>
<div class="a" style="left:689px;top:194px;width:468px;height:53px;background:#8497b0;"></div>
<div class="a" style="left:689px;top:194px;width:1px;height:53px;background:#000;"></div>
<div class="a" style="left:154px;top:198px;width:42px;height:43px;border-radius:6px;background:linear-gradient(#3aa3ff,#0a7bff);box-shadow:-2px 1px 4px rgba(0,0,0,.35)"></div>
<svg class="a" style="left:154px;top:198px" width="42" height="43" viewBox="0 0 42 43"><path d="M21 3.500L38 21.500L35 24.500L31 20.500V39H10.500V20.500L6.500 24.500L3.500 21.500Z M26.500 5.500H31V13.500L26.500 9Z" fill="#fff"/><text x="21" y="32" font-size="24" font-weight="bold" text-anchor="middle" fill="#1787ff" font-family="Liberation Sans,sans-serif">$</text></svg>
<div class="t" style="top:200px;font-size:12.5px;color:#fff;left:227.4px;transform-origin:0 50%;transform:scaleX(0.956);">FAMILY BUDGET</div>
<div class="t" style="top:222px;font-size:15px;color:#fff;font-weight:bold;left:227.4px;transform-origin:0 50%;transform:scaleX(0.946);">EXPENSES</div>
<div class="t" style="top:202px;font-size:11.5px;color:#fff;left:832.5px;transform-origin:0 50%;transform:scaleX(1.033);">For other Excel templates, </div>
<div class="t" style="top:202px;font-size:11.5px;color:#fff;font-weight:bold;left:976.5px;transform-origin:0 50%;transform:scaleX(0.825);">click</div>
<div class="t" style="top:202px;font-size:12px;color:#fff;left:1001.5px;transform-origin:0 50%;font-family:'DejaVu Sans',sans-serif;">→</div>
<div class="t" style="top:219px;font-size:11.5px;color:#fff;left:611.8px;width:400px;text-align:right;transform-origin:100% 50%;transform:scaleX(1.075);">For customization needs, email to: info@someka.net</div>
<div class="a" style="left:1025px;top:200px;width:124px;height:40px;background:#fff;border:1px solid #000;box-shadow:2px 2px 3px rgba(0,0,0,.45)"></div>
<div class="t" style="top:205px;font-size:30px;color:#111;font-weight:bold;left:1027.4px;transform-origin:0 50%;transform:scaleX(1.060);">someka</div>
<div class="a" style="left:1046px;top:208px;width:17px;height:17px;border-radius:50%;background:#111"></div>
<div class="a" style="left:1052px;top:217px;width:1px;height:2px;background:#fff;"></div>
<div class="a" style="left:1054px;top:216px;width:1px;height:3px;background:#fff;"></div>
<div class="a" style="left:1056px;top:214px;width:1px;height:5px;background:#fff;"></div>
<div class="t" style="top:223px;font-size:9.5px;color:#4a4a4a;left:745.4000000000001px;width:400px;text-align:right;transform-origin:100% 50%;transform:scaleX(1.047);">Business Analysis</div>
<div class="a" style="left:1170px;top:194px;width:100px;height:48px;border-radius:8px;border-style:solid;border-width:5px 6px 4px 6px;border-color:#e7e7e7 #bfbfbf #c8c8c8 #b5b5b5;background:linear-gradient(#c1c1c1,#cbcbcb);box-shadow:0 2px 3px rgba(0,0,0,.35),0 0 1px rgba(0,0,0,.55)"></div>
<svg class="a" style="left:1176px;top:198px" width="40" height="40" viewBox="0 0 40 40"><defs><linearGradient id="ag" x1="0" y1="0" x2="0.35" y2="1"><stop offset="0" stop-color="#9a9aa2"/><stop offset="0.45" stop-color="#3a3a3c"/><stop offset="0.7" stop-color="#1c1c1c"/><stop offset="1" stop-color="#5a5a5c"/></linearGradient></defs><path d="M2 14L17 2.300V11H24A13.300 13.300 0 0 1 24 37.600H9.500V31H24A6.500 6.500 0 0 0 24 18H17V25.500Z" fill="url(#ag)"/></svg>
<div class="t" style="top:203px;font-size:9.5px;color:#111;font-weight:bold;font-style:italic;left:1040.2px;width:400px;text-align:center;transform-origin:50% 50%;transform:scaleX(0.991);">Back to</div>
<div class="t" style="top:217px;font-size:9.5px;color:#111;font-weight:bold;font-style:italic;left:1040.3px;width:400px;text-align:center;transform-origin:50% 50%;transform:scaleX(1.076);">Menu</div>
<div class="a" style="left:299px;top:264px;width:781px;height:1px;background:#000;"></div>
<div class="a" style="left:144px;top:286px;width:1014px;height:1px;background:#000;"></div>
<div class="a" style="left:1079px;top:264px;width:79px;height:44px;background:#0a0a0a;"></div>
<div class="a" style="left:299px;top:264px;width:1px;height:23px;background:#000;"></div>
<div class="a" style="left:364px;top:264px;width:1px;height:23px;background:#000;"></div>
<div class="a" style="left:429px;top:264px;width:1px;height:23px;background:#000;"></div>
<div class="a" style="left:494px;top:264px;width:1px;height:23px;background:#000;"></div>
<div class="a" style="left:559px;top:264px;width:1px;height:23px;background:#000;"></div>
<div class="a" style="left:624px;top:264px;width:1px;height:23px;background:#000;"></div>
<div class="a" style="left:689px;top:264px;width:1px;height:23px;background:#000;"></div>
<div class="a" style="left:754px;top:264px;width:1px;height:23px;background:#000;"></div>
<div class="a" style="left:819px;top:264px;width:1px;height:23px;background:#000;"></div>
<div class="a" style="left:884px;top:264px;width:1px;height:23px;background:#000;"></div>
<div class="a" style="left:949px;top:264px;width:1px;height:23px;background:#000;"></div>
<div class="a" style="left:1014px;top:264px;width:1px;height:23px;background:#000;"></div>
<div class="a" style="left:1079px;top:264px;width:1px;height:23px;background:#000;"></div>
<div class="t" style="top:266px;font-size:12.5px;color:#000;font-weight:bold;left:132px;width:400px;text-align:center;transform-origin:50% 50%;transform:scaleX(0.980);">January</div>
<div class="t" style="top:266px;font-size:12.5px;color:#000;font-weight:bold;left:197px;width:400px;text-align:center;transform-origin:50% 50%;transform:scaleX(0.980);">February</div>
<div class="t" style="top:266px;font-size:12.5px;color:#000;font-weight:bold;left:262px;width:400px;text-align:center;transform-origin:50% 50%;transform:scaleX(0.980);">March</div>
<div class="t" style="top:266px;font-size:12.5px;color:#000;font-weight:bold;left:327px;width:400px;text-align:center;transform-origin:50% 50%;transform:scaleX(0.980);">April</div>
<div class="t" style="top:266px;font-size:12.5px;color:#000;font-weight:bold;left:392px;width:400px;text-align:center;transform-origin:50% 50%;transform:scaleX(0.980);">May</div>
<div class="t" style="top:266px;font-size:12.5px;color:#000;font-weight:bold;left:457px;width:400px;text-align:center;transform-origin:50% 50%;transform:scaleX(0.980);">June</div>
<div class="t" style="top:266px;font-size:12.5px;color:#000;font-weight:bold;left:522px;width:400px;text-align:center;transform-origin:50% 50%;transform:scaleX(0.980);">July</div>
<div class="t" style="top:266px;font-size:12.5px;color:#000;font-weight:bold;left:587px;width:400px;text-align:center;transform-origin:50% 50%;transform:scaleX(0.980);">August</div>
<div class="t" style="top:266px;font-size:12.5px;color:#000;font-weight:bold;left:652px;width:400px;text-align:center;transform-origin:50% 50%;">September</div>
<div class="t" style="top:266px;font-size:12.5px;color:#000;font-weight:bold;left:717px;width:400px;text-align:center;transform-origin:50% 50%;transform:scaleX(0.980);">October</div>
<div class="t" style="top:266px;font-size:12.5px;color:#000;font-weight:bold;left:782px;width:400px;text-align:center;transform-origin:50% 50%;transform:scaleX(0.980);">November</div>
<div class="t" style="top:266px;font-size:12.5px;color:#000;font-weight:bold;left:847px;width:400px;text-align:center;transform-origin:50% 50%;transform:scaleX(0.980);">December</div>
<div class="t" style="top:266px;font-size:12.5px;color:#fff;font-weight:bold;left:918.7px;width:400px;text-align:center;transform-origin:50% 50%;transform:scaleX(0.890);">TOTAL</div>
<div class="a" style="left:144px;top:287px;width:935px;height:21px;background:#525252;"></div>
<div class="a" style="left:299px;top:287px;width:1px;height:21px;background:#000;"></div>
<div class="a" style="left:364px;top:287px;width:1px;height:21px;background:#000;"></div>
<div class="a" style="left:429px;top:287px;width:1px;height:21px;background:#000;"></div>
<div class="a" style="left:494px;top:287px;width:1px;height:21px;background:#000;"></div>
<div class="a" style="left:559px;top:287px;width:1px;height:21px;background:#000;"></div>
<div class="a" style="left:624px;top:287px;width:1px;height:21px;background:#000;"></div>
<div class="a" style="left:689px;top:287px;width:1px;height:21px;background:#000;"></div>
<div class="a" style="left:754px;top:287px;width:1px;height:21px;background:#000;"></div>
<div class="a" style="left:819px;top:287px;width:1px;height:21px;background:#000;"></div>
<div class="a" style="left:884px;top:287px;width:1px;height:21px;background:#000;"></div>
<div class="a" style="left:949px;top:287px;width:1px;height:21px;background:#000;"></div>
<div class="a" style="left:1014px;top:287px;width:1px;height:21px;background:#000;"></div>
<div class="a" style="left:1079px;top:287px;width:1px;height:21px;background:#000;"></div>
<div class="a" style="left:144px;top:308px;width:1014px;height:1px;background:#6a6a6a;"></div>
<div class="t" style="top:288px;font-size:12px;color:#fff;font-weight:bold;left:147.7px;transform-origin:0 50%;transform:scaleX(0.920);">EXPENSES TOTAL</div>
<div class="t" style="top:288px;font-size:12.5px;color:#fff;font-weight:bold;left:-41.30000000000001px;width:400px;text-align:right;transform-origin:100% 50%;transform:scaleX(1.020);">$7.505,0</div>
<div class="t" style="top:288px;font-size:12.5px;color:#fff;font-weight:bold;left:23.69999999999999px;width:400px;text-align:right;transform-origin:100% 50%;transform:scaleX(1.020);">$4.735,0</div>
<div class="t" style="top:288px;font-size:12.5px;color:#fff;font-weight:bold;left:88.69999999999999px;width:400px;text-align:right;transform-origin:100% 50%;transform:scaleX(1.020);">$5.190,0</div>
<div class="t" style="top:288px;font-size:12.5px;color:#fff;font-weight:bold;left:153.70000000000005px;width:400px;text-align:right;transform-origin:100% 50%;transform:scaleX(1.020);">$6.070,0</div>
<div class="t" style="top:288px;font-size:12.5px;color:#fff;font-weight:bold;left:218.70000000000005px;width:400px;text-align:right;transform-origin:100% 50%;transform:scaleX(1.020);">$5.950,0</div>
<div class="t" style="top:288px;font-size:12.5px;color:#fff;font-weight:bold;left:283.70000000000005px;width:400px;text-align:right;transform-origin:100% 50%;transform:scaleX(1.020);">$12.505,0</div>
<div class="t" style="top:288px;font-size:12.5px;color:#fff;font-weight:bold;left:348.70000000000005px;width:400px;text-align:right;transform-origin:100% 50%;transform:scaleX(1.020);">$6.435,0</div>
<div class="t" style="top:288px;font-size:12.5px;color:#fff;font-weight:bold;left:413.70000000000005px;width:400px;text-align:right;transform-origin:100% 50%;transform:scaleX(1.020);">$5.980,0</div>
<div class="t" style="top:288px;font-size:12.5px;color:#fff;font-weight:bold;left:478.70000000000005px;width:400px;text-align:right;transform-origin:100% 50%;transform:scaleX(1.020);">$6.275,0</div>
<div class="t" style="top:288px;font-size:12.5px;color:#fff;font-weight:bold;left:543.7px;width:400px;text-align:right;transform-origin:100% 50%;transform:scaleX(1.020);">$6.890,0</div>
<div class="t" style="top:288px;font-size:12.5px;color:#fff;font-weight:bold;left:608.7px;width:400px;text-align:right;transform-origin:100% 50%;transform:scaleX(1.020);">$5.700,0</div>
<div class="t" style="top:288px;font-size:12.5px;color:#fff;font-weight:bold;left:673.7px;width:400px;text-align:right;transform-origin:100% 50%;transform:scaleX(1.020);">$5.900,0</div>
<div class="t" style="top:288px;font-size:12.5px;color:#fff;font-weight:bold;left:917.8px;width:400px;text-align:center;transform-origin:50% 50%;transform:scaleX(1.020);">$79.135,0</div>
<div class="a" style="left:144px;top:325px;width:1014px;height:17px;background:#1f4e79;"></div>
<div class="a" style="left:144px;top:325px;width:1014px;height:1px;background:#000;"></div>
<div class="a" style="left:144px;top:325px;width:1px;height:18px;background:#000;"></div>
<div class="a" style="left:299px;top:325px;width:1px;height:18px;background:#000;"></div>
<div class="a" style="left:364px;top:325px;width:1px;height:18px;background:#000;"></div>
<div class="a" style="left:429px;top:325px;width:1px;height:18px;background:#000;"></div>
<div class="a" style="left:494px;top:325px;width:1px;height:18px;background:#000;"></div>
<div class="a" style="left:559px;top:325px;width:1px;height:18px;background:#000;"></div>
<div class="a" style="left:624px;top:325px;width:1px;height:18px;background:#000;"></div>
<div class="a" style="left:689px;top:325px;width:1px;height:18px;background:#000;"></div>
<div class="a" style="left:754px;top:325px;width:1px;height:18px;background:#000;"></div>
<div class="a" style="left:819px;top:325px;width:1px;height:18px;background:#000;"></div>
<div class="a" style="left:884px;top:325px;width:1px;height:18px;background:#000;"></div>
<div class="a" style="left:949px;top:325px;width:1px;height:18px;background:#000;"></div>
<div class="a" style="left:1014px;top:325px;width:1px;height:18px;background:#000;"></div>
<div class="a" style="left:1079px;top:325px;width:1px;height:18px;background:#000;"></div>
<div class="a" style="left:1157px;top:325px;width:1px;height:18px;background:#000;"></div>
<div class="a" style="left:299px;top:342px;width:66px;height:1px;background:#000;"></div>
<div class="t" style="top:324px;font-size:11px;color:#fff;font-weight:bold;left:147.7px;transform-origin:0 50%;transform:scaleX(0.917);">HOME EXPENSES / TOTAL</div>
<div class="t" style="top:324px;font-size:11px;color:#fff;font-weight:bold;left:132.3px;width:400px;text-align:center;transform-origin:50% 50%;transform:scaleX(0.985);">$1.110,0</div>
<div class="t" style="top:324px;font-size:11px;color:#fff;font-weight:bold;left:197.3px;width:400px;text-align:center;transform-origin:50% 50%;transform:scaleX(0.985);">$1.085,0</div>
<div class="t" style="top:324px;font-size:11px;color:#fff;font-weight:bold;left:262.3px;width:400px;text-align:center;transform-origin:50% 50%;transform:scaleX(0.985);">$1.110,0</div>
<div class="t" style="top:324px;font-size:11px;color:#fff;font-weight:bold;left:327.29999999999995px;width:400px;text-align:center;transform-origin:50% 50%;transform:scaleX(0.985);">$1.530,0</div>
<div class="t" style="top:324px;font-size:11px;color:#fff;font-weight:bold;left:392.29999999999995px;width:400px;text-align:center;transform-origin:50% 50%;transform:scaleX(0.985);">$1.110,0</div>
<div class="t" style="top:324px;font-size:11px;color:#fff;font-weight:bold;left:457.29999999999995px;width:400px;text-align:center;transform-origin:50% 50%;transform:scaleX(0.985);">$930,0</div>
<div class="t" style="top:324px;font-size:11px;color:#fff;font-weight:bold;left:522.3px;width:400px;text-align:center;transform-origin:50% 50%;transform:scaleX(0.985);">$1.340,0</div>
<div class="t" style="top:324px;font-size:11px;color:#fff;font-weight:bold;left:587.3px;width:400px;text-align:center;transform-origin:50% 50%;transform:scaleX(0.985);">$1.275,0</div>
<div class="t" style="top:324px;font-size:11px;color:#fff;font-weight:bold;left:652.3px;width:400px;text-align:center;transform-origin:50% 50%;transform:scaleX(0.985);">$1.275,0</div>
<div class="t" style="top:324px;font-size:11px;color:#fff;font-weight:bold;left:717.3px;width:400px;text-align:center;transform-origin:50% 50%;transform:scaleX(0.985);">$1.190,0</div>
<div class="t" style="top:324px;font-size:11px;color:#fff;font-weight:bold;left:782.3px;width:400px;text-align:center;transform-origin:50% 50%;transform:scaleX(0.985);">$1.195,0</div>
<div class="t" style="top:324px;font-size:11px;color:#fff;font-weight:bold;left:847.3px;width:400px;text-align:center;transform-origin:50% 50%;transform:scaleX(0.985);">$1.195,0</div>
<div class="t" style="top:324px;font-size:12.5px;color:#fff;font-weight:bold;left:917.8px;width:400px;text-align:center;transform-origin:50% 50%;transform:scaleX(1.020);">$14.345,0</div>
<div class="a" style="left:144px;top:359px;width:1014px;height:17px;background:#375623;"></div>
<div class="a" style="left:299px;top:359px;width:859px;height:1px;background:rgba(0,0,0,.55);"></div>
<div class="a" style="left:299px;top:359px;width:1px;height:18px;background:#000;"></div>
<div class="a" style="left:364px;top:359px;width:1px;height:18px;background:#000;"></div>
<div class="a" style="left:429px;top:359px;width:1px;height:18px;background:#000;"></div>
<div class="a" style="left:494px;top:359px;width:1px;height:18px;background:#000;"></div>
<div class="a" style="left:559px;top:359px;width:1px;height:18px;background:#000;"></div>
<div class="a" style="left:624px;top:359px;width:1px;height:18px;background:#000;"></div>
<div class="a" style="left:689px;top:359px;width:1px;height:18px;background:#000;"></div>
<div class="a" style="left:754px;top:359px;width:1px;height:18px;background:#000;"></div>
<div class="a" style="left:819px;top:359px;width:1px;height:18px;background:#000;"></div>
<div class="a" style="left:884px;top:359px;width:1px;height:18px;background:#000;"></div>
<div class="a" style="left:949px;top:359px;width:1px;height:18px;background:#000;"></div>
<div class="a" style="left:1014px;top:359px;width:1px;height:18px;background:#000;"></div>
<div class="a" style="left:1079px;top:359px;width:1px;height:18px;background:#000;"></div>
<div class="a" style="left:1157px;top:359px;width:1px;height:18px;background:#000;"></div>
<div class="a" style="left:299px;top:376px;width:66px;height:1px;background:#000;"></div>
<div class="t" style="top:358px;font-size:11px;color:#fff;font-weight:bold;left:147.7px;transform-origin:0 50%;transform:scaleX(0.917);">DAILY LIVING / TOTAL</div>
<div class="t" style="top:358px;font-size:11px;color:#fff;font-weight:bold;left:132.3px;width:400px;text-align:center;transform-origin:50% 50%;transform:scaleX(0.985);">$230,0</div>
<div class="t" style="top:358px;font-size:11px;color:#fff;font-weight:bold;left:197.3px;width:400px;text-align:center;transform-origin:50% 50%;transform:scaleX(0.985);">$125,0</div>
<div class="t" style="top:358px;font-size:11px;color:#fff;font-weight:bold;left:262.3px;width:400px;text-align:center;transform-origin:50% 50%;transform:scaleX(0.985);">$230,0</div>
<div class="t" style="top:358px;font-size:11px;color:#fff;font-weight:bold;left:327.29999999999995px;width:400px;text-align:center;transform-origin:50% 50%;transform:scaleX(0.985);">$425,0</div>
<div class="t" style="top:358px;font-size:11px;color:#fff;font-weight:bold;left:392.29999999999995px;width:400px;text-align:center;transform-origin:50% 50%;transform:scaleX(0.985);">$75,0</div>
<div class="t" style="top:358px;font-size:11px;color:#fff;font-weight:bold;left:457.29999999999995px;width:400px;text-align:center;transform-origin:50% 50%;transform:scaleX(0.985);">$7.250,0</div>
<div class="t" style="top:358px;font-size:11px;color:#fff;font-weight:bold;left:522.3px;width:400px;text-align:center;transform-origin:50% 50%;transform:scaleX(0.985);">$675,0</div>
<div class="t" style="top:358px;font-size:11px;color:#fff;font-weight:bold;left:587.3px;width:400px;text-align:center;transform-origin:50% 50%;transform:scaleX(0.985);">$215,0</div>
<div class="t" style="top:358px;font-size:11px;color:#fff;font-weight:bold;left:652.3px;width:400px;text-align:center;transform-origin:50% 50%;transform:scaleX(0.985);">$460,0</div>
<div class="t" style="top:358px;font-size:11px;color:#fff;font-weight:bold;left:717.3px;width:400px;text-align:center;transform-origin:50% 50%;transform:scaleX(0.985);">$715,0</div>
<div class="t" style="top:358px;font-size:11px;color:#fff;font-weight:bold;left:782.3px;width:400px;text-align:center;transform-origin:50% 50%;transform:scaleX(0.985);">$590,0</div>
<div class="t" style="top:358px;font-size:11px;color:#fff;font-weight:bold;left:847.3px;width:400px;text-align:center;transform-origin:50% 50%;transform:scaleX(0.985);">$400,0</div>
<div class="t" style="top:358px;font-size:12.5px;color:#fff;font-weight:bold;left:917.8px;width:400px;text-align:center;transform-origin:50% 50%;transform:scaleX(1.020);">$11.390,0</div>
<div class="a" style="left:144px;top:393px;width:1014px;height:17px;background:#7f6000;"></div>
<div class="a" style="left:299px;top:393px;width:859px;height:1px;background:rgba(0,0,0,.55);"></div>
<div class="a" style="left:299px;top:393px;width:1px;height:18px;background:#000;"></div>
<div class="a" style="left:364px;top:393px;width:1px;height:18px;background:#000;"></div>
<div class="a" style="left:429px;top:393px;width:1px;height:18px;background:#000;"></div>
<div class="a" style="left:494px;top:393px;width:1px;height:18px;background:#000;"></div>
<div class="a" style="left:559px;top:393px;width:1px;height:18px;background:#000;"></div>
<div class="a" style="left:624px;top:393px;width:1px;height:18px;background:#000;"></div>
<div class="a" style="left:689px;top:393px;width:1px;height:18px;background:#000;"></div>
<div class="a" style="left:754px;top:393px;width:1px;height:18px;background:#000;"></div>
<div class="a" style="left:819px;top:393px;width:1px;height:18px;background:#000;"></div>
<div class="a" style="left:884px;top:393px;width:1px;height:18px;background:#000;"></div>
<div class="a" style="left:949px;top:393px;width:1px;height:18px;background:#000;"></div>
<div class="a" style="left:1014px;top:393px;width:1px;height:18px;background:#000;"></div>
<div class="a" style="left:1079px;top:393px;width:1px;height:18px;background:#000;"></div>
<div class="a" style="left:1157px;top:393px;width:1px;height:18px;background:#000;"></div>
<div class="a" style="left:299px;top:410px;width:66px;height:1px;background:#000;"></div>
<div class="t" style="top:392px;font-size:11px;color:#fff;font-weight:bold;left:147.7px;transform-origin:0 50%;transform:scaleX(0.917);">TRANSPORTATION  / TOTAL</div>
<div class="t" style="top:392px;font-size:11px;color:#fff;font-weight:bold;left:132.3px;width:400px;text-align:center;transform-origin:50% 50%;transform:scaleX(0.985);">$375,0</div>
<div class="t" style="top:392px;font-size:11px;color:#fff;font-weight:bold;left:197.3px;width:400px;text-align:center;transform-origin:50% 50%;transform:scaleX(0.985);">$190,0</div>
<div class="t" style="top:392px;font-size:11px;color:#fff;font-weight:bold;left:262.3px;width:400px;text-align:center;transform-origin:50% 50%;transform:scaleX(0.985);">$190,0</div>
<div class="t" style="top:392px;font-size:11px;color:#fff;font-weight:bold;left:327.29999999999995px;width:400px;text-align:center;transform-origin:50% 50%;transform:scaleX(0.985);">$375,0</div>
<div class="t" style="top:392px;font-size:11px;color:#fff;font-weight:bold;left:392.29999999999995px;width:400px;text-align:center;transform-origin:50% 50%;transform:scaleX(0.985);">$375,0</div>
<div class="t" style="top:392px;font-size:11px;color:#fff;font-weight:bold;left:457.29999999999995px;width:400px;text-align:center;transform-origin:50% 50%;transform:scaleX(0.985);">$375,0</div>
<div class="t" style="top:392px;font-size:11px;color:#fff;font-weight:bold;left:522.3px;width:400px;text-align:center;transform-origin:50% 50%;transform:scaleX(0.985);">$375,0</div>
<div class="t" style="top:392px;font-size:11px;color:#fff;font-weight:bold;left:587.3px;width:400px;text-align:center;transform-origin:50% 50%;transform:scaleX(0.985);">$375,0</div>
<div class="t" style="top:392px;font-size:11px;color:#fff;font-weight:bold;left:652.3px;width:400px;text-align:center;transform-origin:50% 50%;transform:scaleX(0.985);">$375,0</div>
<div class="t" style="top:392px;font-size:11px;color:#fff;font-weight:bold;left:717.3px;width:400px;text-align:center;transform-origin:50% 50%;transform:scaleX(0.985);">$190,0</div>
<div class="t" style="top:392px;font-size:11px;color:#fff;font-weight:bold;left:782.3px;width:400px;text-align:center;transform-origin:50% 50%;transform:scaleX(0.985);">$190,0</div>
<div class="t" style="top:392px;font-size:11px;color:#fff;font-weight:bold;left:847.3px;width:400px;text-align:center;transform-origin:50% 50%;transform:scaleX(0.985);">$375,0</div>
<div class="t" style="top:392px;font-size:12.5px;color:#fff;font-weight:bold;left:917.8px;width:400px;text-align:center;transform-origin:50% 50%;transform:scaleX(1.020);">$3.760,0</div>
<div class="a" style="left:144px;top:427px;width:1014px;height:17px;background:#1f4e79;"></div>
<div class="a" style="left:299px;top:427px;width:859px;height:1px;background:rgba(0,0,0,.55);"></div>
<div class="a" style="left:299px;top:427px;width:1px;height:18px;background:#000;"></div>
<div class="a" style="left:364px;top:427px;width:1px;height:18px;background:#000;"></div>
<div class="a" style="left:429px;top:427px;width:1px;height:18px;background:#000;"></div>
<div class="a" style="left:494px;top:427px;width:1px;height:18px;background:#000;"></div>
<div class="a" style="left:559px;top:427px;width:1px;height:18px;background:#000;"></div>
<div class="a" style="left:624px;top:427px;width:1px;height:18px;background:#000;"></div>
<div class="a" style="left:689px;top:427px;width:1px;height:18px;background:#000;"></div>
<div class="a" style="left:754px;top:427px;width:1px;height:18px;background:#000;"></div>
<div class="a" style="left:819px;top:427px;width:1px;height:18px;background:#000;"></div>
<div class="a" style="left:884px;top:427px;width:1px;height:18px;background:#000;"></div>
<div class="a" style="left:949px;top:427px;width:1px;height:18px;background:#000;"></div>
<div class="a" style="left:1014px;top:427px;width:1px;height:18px;background:#000;"></div>
<div class="a" style="left:1079px;top:427px;width:1px;height:18px;background:#000;"></div>
<div class="a" style="left:1157px;top:427px;width:1px;height:18px;background:#000;"></div>
<div class="a" style="left:299px;top:444px;width:66px;height:1px;background:#000;"></div>
<div class="t" style="top:426px;font-size:11px;color:#fff;font-weight:bold;left:147.7px;transform-origin:0 50%;transform:scaleX(0.917);">CHILDREN  / TOTAL</div>
<div class="t" style="top:426px;font-size:11px;color:#fff;font-weight:bold;left:132.3px;width:400px;text-align:center;transform-origin:50% 50%;transform:scaleX(0.985);">$670,0</div>
<div class="t" style="top:426px;font-size:11px;color:#fff;font-weight:bold;left:197.3px;width:400px;text-align:center;transform-origin:50% 50%;transform:scaleX(0.985);">$510,0</div>
<div class="t" style="top:426px;font-size:11px;color:#fff;font-weight:bold;left:262.3px;width:400px;text-align:center;transform-origin:50% 50%;transform:scaleX(0.985);">$345,0</div>
<div class="t" style="top:426px;font-size:11px;color:#fff;font-weight:bold;left:327.29999999999995px;width:400px;text-align:center;transform-origin:50% 50%;transform:scaleX(0.985);">$345,0</div>
<div class="t" style="top:426px;font-size:11px;color:#fff;font-weight:bold;left:392.29999999999995px;width:400px;text-align:center;transform-origin:50% 50%;transform:scaleX(0.985);">$955,0</div>
<div class="t" style="top:426px;font-size:11px;color:#fff;font-weight:bold;left:457.29999999999995px;width:400px;text-align:center;transform-origin:50% 50%;transform:scaleX(0.985);">$570,0</div>
<div class="t" style="top:426px;font-size:11px;color:#fff;font-weight:bold;left:522.3px;width:400px;text-align:center;transform-origin:50% 50%;transform:scaleX(0.985);">$570,0</div>
<div class="t" style="top:426px;font-size:11px;color:#fff;font-weight:bold;left:587.3px;width:400px;text-align:center;transform-origin:50% 50%;transform:scaleX(0.985);">$570,0</div>
<div class="t" style="top:426px;font-size:11px;color:#fff;font-weight:bold;left:652.3px;width:400px;text-align:center;transform-origin:50% 50%;transform:scaleX(0.985);">$955,0</div>
<div class="t" style="top:426px;font-size:11px;color:#fff;font-weight:bold;left:717.3px;width:400px;text-align:center;transform-origin:50% 50%;transform:scaleX(0.985);">$955,0</div>
<div class="t" style="top:426px;font-size:11px;color:#fff;font-weight:bold;left:782.3px;width:400px;text-align:center;transform-origin:50% 50%;transform:scaleX(0.985);">$570,0</div>
<div class="t" style="top:426px;font-size:11px;color:#fff;font-weight:bold;left:847.3px;width:400px;text-align:center;transform-origin:50% 50%;transform:scaleX(0.985);">$570,0</div>
<div class="t" style="top:426px;font-size:12.5px;color:#fff;font-weight:bold;left:917.8px;width:400px;text-align:center;transform-origin:50% 50%;transform:scaleX(1.020);">$7.585,0</div>
<div class="a" style="left:144px;top:461px;width:1014px;height:17px;background:#375623;"></div>
<div class="a" style="left:299px;top:461px;width:859px;height:1px;background:rgba(0,0,0,.55);"></div>
<div class="a" style="left:299px;top:461px;width:1px;height:18px;background:#000;"></div>
<div class="a" style="left:364px;top:461px;width:1px;height:18px;background:#000;"></div>
<div class="a" style="left:429px;top:461px;width:1px;height:18px;background:#000;"></div>
<div class="a" style="left:494px;top:461px;width:1px;height:18px;background:#000;"></div>
<div class="a" style="left:559px;top:461px;width:1px;height:18px;background:#000;"></div>
<div class="a" style="left:624px;top:461px;width:1px;height:18px;background:#000;"></div>
<div class="a" style="left:689px;top:461px;width:1px;height:18px;background:#000;"></div>
<div class="a" style="left:754px;top:461px;width:1px;height:18px;background:#000;"></div>
<div class="a" style="left:819px;top:461px;width:1px;height:18px;background:#000;"></div>
<div class="a" style="left:884px;top:461px;width:1px;height:18px;background:#000;"></div>
<div class="a" style="left:949px;top:461px;width:1px;height:18px;background:#000;"></div>
<div class="a" style="left:1014px;top:461px;width:1px;height:18px;background:#000;"></div>
<div class="a" style="left:1079px;top:461px;width:1px;height:18px;background:#000;"></div>
<div class="a" style="left:1157px;top:461px;width:1px;height:18px;background:#000;"></div>
<div class="a" style="left:299px;top:478px;width:66px;height:1px;background:#000;"></div>
<div class="t" style="top:460px;font-size:11px;color:#fff;font-weight:bold;left:147.7px;transform-origin:0 50%;transform:scaleX(0.917);">HEALTH  / TOTAL</div>
<div class="t" style="top:460px;font-size:11px;color:#fff;font-weight:bold;left:132.3px;width:400px;text-align:center;transform-origin:50% 50%;transform:scaleX(0.985);">$305,0</div>
<div class="t" style="top:460px;font-size:11px;color:#fff;font-weight:bold;left:197.3px;width:400px;text-align:center;transform-origin:50% 50%;transform:scaleX(0.985);">$305,0</div>
<div class="t" style="top:460px;font-size:11px;color:#fff;font-weight:bold;left:262.3px;width:400px;text-align:center;transform-origin:50% 50%;transform:scaleX(0.985);">$305,0</div>
<div class="t" style="top:460px;font-size:11px;color:#fff;font-weight:bold;left:327.29999999999995px;width:400px;text-align:center;transform-origin:50% 50%;transform:scaleX(0.985);">$315,0</div>
<div class="t" style="top:460px;font-size:11px;color:#fff;font-weight:bold;left:392.29999999999995px;width:400px;text-align:center;transform-origin:50% 50%;transform:scaleX(0.985);">$315,0</div>
<div class="t" style="top:460px;font-size:11px;color:#fff;font-weight:bold;left:457.29999999999995px;width:400px;text-align:center;transform-origin:50% 50%;transform:scaleX(0.985);">$285,0</div>
<div class="t" style="top:460px;font-size:11px;color:#fff;font-weight:bold;left:522.3px;width:400px;text-align:center;transform-origin:50% 50%;transform:scaleX(0.985);">$215,0</div>
<div class="t" style="top:460px;font-size:11px;color:#fff;font-weight:bold;left:587.3px;width:400px;text-align:center;transform-origin:50% 50%;transform:scaleX(0.985);">$315,0</div>
<div class="t" style="top:460px;font-size:11px;color:#fff;font-weight:bold;left:652.3px;width:400px;text-align:center;transform-origin:50% 50%;transform:scaleX(0.985);">$315,0</div>
<div class="t" style="top:460px;font-size:11px;color:#fff;font-weight:bold;left:717.3px;width:400px;text-align:center;transform-origin:50% 50%;transform:scaleX(0.985);">$315,0</div>
<div class="t" style="top:460px;font-size:11px;color:#fff;font-weight:bold;left:782.3px;width:400px;text-align:center;transform-origin:50% 50%;transform:scaleX(0.985);">$305,0</div>
<div class="t" style="top:460px;font-size:11px;color:#fff;font-weight:bold;left:847.3px;width:400px;text-align:center;transform-origin:50% 50%;transform:scaleX(0.985);">$305,0</div>
<div class="t" style="top:460px;font-size:12.5px;color:#fff;font-weight:bold;left:917.8px;width:400px;text-align:center;transform-origin:50% 50%;transform:scaleX(1.020);">$3.600,0</div>
<div class="a" style="left:144px;top:495px;width:1014px;height:17px;background:#7f6000;"></div>
<div class="a" style="left:299px;top:495px;width:859px;height:1px;background:rgba(0,0,0,.55);"></div>
<div class="a" style="left:299px;top:495px;width:1px;height:18px;background:#000;"></div>
<div class="a" style="left:364px;top:495px;width:1px;height:18px;background:#000;"></div>
<div class="a" style="left:429px;top:495px;width:1px;height:18px;background:#000;"></div>
<div class="a" style="left:494px;top:495px;width:1px;height:18px;background:#000;"></div>
<div class="a" style="left:559px;top:495px;width:1px;height:18px;background:#000;"></div>
<div class="a" style="left:624px;top:495px;width:1px;height:18px;background:#000;"></div>
<div class="a" style="left:689px;top:495px;width:1px;height:18px;background:#000;"></div>
<div class="a" style="left:754px;top:495px;width:1px;height:18px;background:#000;"></div>
<div class="a" style="left:819px;top:495px;width:1px;height:18px;background:#000;"></div>
<div class="a" style="left:884px;top:495px;width:1px;height:18px;background:#000;"></div>
<div class="a" style="left:949px;top:495px;width:1px;height:18px;background:#000;"></div>
<div class="a" style="left:1014px;top:495px;width:1px;height:18px;background:#000;"></div>
<div class="a" style="left:1079px;top:495px;width:1px;height:18px;background:#000;"></div>
<div class="a" style="left:1157px;top:495px;width:1px;height:18px;background:#000;"></div>
<div class="a" style="left:299px;top:512px;width:66px;height:1px;background:#000;"></div>
<div class="t" style="top:494px;font-size:11px;color:#fff;font-weight:bold;left:147.7px;transform-origin:0 50%;transform:scaleX(0.917);">INSURANCE  / TOTAL</div>
<div class="t" style="top:494px;font-size:11px;color:#fff;font-weight:bold;left:132.3px;width:400px;text-align:center;transform-origin:50% 50%;transform:scaleX(0.985);">$420,0</div>
<div class="t" style="top:494px;font-size:11px;color:#fff;font-weight:bold;left:197.3px;width:400px;text-align:center;transform-origin:50% 50%;transform:scaleX(0.985);">$200,0</div>
<div class="t" style="top:494px;font-size:11px;color:#fff;font-weight:bold;left:262.3px;width:400px;text-align:center;transform-origin:50% 50%;transform:scaleX(0.985);">$200,0</div>
<div class="t" style="top:494px;font-size:11px;color:#fff;font-weight:bold;left:327.29999999999995px;width:400px;text-align:center;transform-origin:50% 50%;transform:scaleX(0.985);">$420,0</div>
<div class="t" style="top:494px;font-size:11px;color:#fff;font-weight:bold;left:392.29999999999995px;width:400px;text-align:center;transform-origin:50% 50%;transform:scaleX(0.985);">$420,0</div>
<div class="t" style="top:494px;font-size:11px;color:#fff;font-weight:bold;left:457.29999999999995px;width:400px;text-align:center;transform-origin:50% 50%;transform:scaleX(0.985);">$200,0</div>
<div class="t" style="top:494px;font-size:11px;color:#fff;font-weight:bold;left:522.3px;width:400px;text-align:center;transform-origin:50% 50%;transform:scaleX(0.985);">$200,0</div>
<div class="t" style="top:494px;font-size:11px;color:#fff;font-weight:bold;left:587.3px;width:400px;text-align:center;transform-origin:50% 50%;transform:scaleX(0.985);">$200,0</div>
<div class="t" style="top:494px;font-size:11px;color:#fff;font-weight:bold;left:652.3px;width:400px;text-align:center;transform-origin:50% 50%;transform:scaleX(0.985);">$420,0</div>
<div class="t" style="top:494px;font-size:11px;color:#fff;font-weight:bold;left:717.3px;width:400px;text-align:center;transform-origin:50% 50%;transform:scaleX(0.985);">$420,0</div>
<div class="t" style="top:494px;font-size:11px;color:#fff;font-weight:bold;left:782.3px;width:400px;text-align:center;transform-origin:50% 50%;transform:scaleX(0.985);">$365,0</div>
<div class="t" style="top:494px;font-size:11px;color:#fff;font-weight:bold;left:847.3px;width:400px;text-align:center;transform-origin:50% 50%;transform:scaleX(0.985);">$365,0</div>
<div class="t" style="top:494px;font-size:12.5px;color:#fff;font-weight:bold;left:917.8px;width:400px;text-align:center;transform-origin:50% 50%;transform:scaleX(1.020);">$3.830,0</div>
<div class="a" style="left:144px;top:529px;width:1014px;height:17px;background:#1f4e79;"></div>
<div class="a" style="left:299px;top:529px;width:859px;height:1px;background:rgba(0,0,0,.55);"></div>
<div class="a" style="left:299px;top:529px;width:1px;height:18px;background:#000;"></div>
<div class="a" style="left:364px;top:529px;width:1px;height:18px;background:#000;"></div>
<div class="a" style="left:429px;top:529px;width:1px;height:18px;background:#000;"></div>
<div class="a" style="left:494px;top:529px;width:1px;height:18px;background:#000;"></div>
<div class="a" style="left:559px;top:529px;width:1px;height:18px;background:#000;"></div>
<div class="a" style="left:624px;top:529px;width:1px;height:18px;background:#000;"></div>
<div class="a" style="left:689px;top:529px;width:1px;height:18px;background:#000;"></div>
<div class="a" style="left:754px;top:529px;width:1px;height:18px;background:#000;"></div>
<div class="a" style="left:819px;top:529px;width:1px;height:18px;background:#000;"></div>
<div class="a" style="left:884px;top:529px;width:1px;height:18px;background:#000;"></div>
<div class="a" style="left:949px;top:529px;width:1px;height:18px;background:#000;"></div>
<div class="a" style="left:1014px;top:529px;width:1px;height:18px;background:#000;"></div>
<div class="a" style="left:1079px;top:529px;width:1px;height:18px;background:#000;"></div>
<div class="a" style="left:1157px;top:529px;width:1px;height:18px;background:#000;"></div>
<div class="a" style="left:299px;top:546px;width:66px;height:1px;background:#000;"></div>
<div class="t" style="top:528px;font-size:11px;color:#fff;font-weight:bold;left:147.7px;transform-origin:0 50%;transform:scaleX(0.917);">EDUCATION  / TOTAL</div>
<div class="t" style="top:528px;font-size:11px;color:#fff;font-weight:bold;left:132.3px;width:400px;text-align:center;transform-origin:50% 50%;transform:scaleX(0.985);">$30,0</div>
<div class="t" style="top:528px;font-size:11px;color:#fff;font-weight:bold;left:197.3px;width:400px;text-align:center;transform-origin:50% 50%;transform:scaleX(0.985);">$45,0</div>
<div class="t" style="top:528px;font-size:11px;color:#fff;font-weight:bold;left:262.3px;width:400px;text-align:center;transform-origin:50% 50%;transform:scaleX(0.985);">$0,0</div>
<div class="t" style="top:528px;font-size:11px;color:#fff;font-weight:bold;left:327.29999999999995px;width:400px;text-align:center;transform-origin:50% 50%;transform:scaleX(0.985);">$10,0</div>
<div class="t" style="top:528px;font-size:11px;color:#fff;font-weight:bold;left:392.29999999999995px;width:400px;text-align:center;transform-origin:50% 50%;transform:scaleX(0.985);">$25,0</div>
<div class="t" style="top:528px;font-size:11px;color:#fff;font-weight:bold;left:457.29999999999995px;width:400px;text-align:center;transform-origin:50% 50%;transform:scaleX(0.985);">$65,0</div>
<div class="t" style="top:528px;font-size:11px;color:#fff;font-weight:bold;left:522.3px;width:400px;text-align:center;transform-origin:50% 50%;transform:scaleX(0.985);">$100,0</div>
<div class="t" style="top:528px;font-size:11px;color:#fff;font-weight:bold;left:587.3px;width:400px;text-align:center;transform-origin:50% 50%;transform:scaleX(0.985);">$25,0</div>
<div class="t" style="top:528px;font-size:11px;color:#fff;font-weight:bold;left:652.3px;width:400px;text-align:center;transform-origin:50% 50%;transform:scaleX(0.985);">$15,0</div>
<div class="t" style="top:528px;font-size:11px;color:#fff;font-weight:bold;left:717.3px;width:400px;text-align:center;transform-origin:50% 50%;transform:scaleX(0.985);">$15,0</div>
<div class="t" style="top:528px;font-size:11px;color:#fff;font-weight:bold;left:782.3px;width:400px;text-align:center;transform-origin:50% 50%;transform:scaleX(0.985);">$45,0</div>
<div class="t" style="top:528px;font-size:11px;color:#fff;font-weight:bold;left:847.3px;width:400px;text-align:center;transform-origin:50% 50%;transform:scaleX(0.985);">$115,0</div>
<div class="t" style="top:528px;font-size:12.5px;color:#fff;font-weight:bold;left:917.8px;width:400px;text-align:center;transform-origin:50% 50%;transform:scaleX(1.020);">$490,0</div>
<div class="a" style="left:144px;top:563px;width:1014px;height:17px;background:#375623;"></div>
<div class="a" style="left:299px;top:563px;width:859px;height:1px;background:rgba(0,0,0,.55);"></div>
<div class="a" style="left:299px;top:563px;width:1px;height:18px;background:#000;"></div>
<div class="a" style="left:364px;top:563px;width:1px;height:18px;background:#000;"></div>
<div class="a" style="left:429px;top:563px;width:1px;height:18px;background:#000;"></div>
<div class="a" style="left:494px;top:563px;width:1px;height:18px;background:#000;"></div>
<div class="a" style="left:559px;top:563px;width:1px;height:18px;background:#000;"></div>
<div class="a" style="left:624px;top:563px;width:1px;height:18px;background:#000;"></div>
<div class="a" style="left:689px;top:563px;width:1px;height:18px;background:#000;"></div>
<div class="a" style="left:754px;top:563px;width:1px;height:18px;background:#000;"></div>
<div class="a" style="left:819px;top:563px;width:1px;height:18px;background:#000;"></div>
<div class="a" style="left:884px;top:563px;width:1px;height:18px;background:#000;"></div>
<div class="a" style="left:949px;top:563px;width:1px;height:18px;background:#000;"></div>
<div class="a" style="left:1014px;top:563px;width:1px;height:18px;background:#000;"></div>
<div class="a" style="left:1079px;top:563px;width:1px;height:18px;background:#000;"></div>
<div class="a" style="left:1157px;top:563px;width:1px;height:18px;background:#000;"></div>
<div class="a" style="left:299px;top:580px;width:66px;height:1px;background:#000;"></div>
<div class="t" style="top:562px;font-size:11px;color:#fff;font-weight:bold;left:147.7px;transform-origin:0 50%;transform:scaleX(0.917);">CHARITY / GIFTS  / TOTAL</div>
<div class="t" style="top:562px;font-size:11px;color:#fff;font-weight:bold;left:132.3px;width:400px;text-align:center;transform-origin:50% 50%;transform:scaleX(0.985);">$50,0</div>
<div class="t" style="top:562px;font-size:11px;color:#fff;font-weight:bold;left:197.3px;width:400px;text-align:center;transform-origin:50% 50%;transform:scaleX(0.985);">$30,0</div>
<div class="t" style="top:562px;font-size:11px;color:#fff;font-weight:bold;left:262.3px;width:400px;text-align:center;transform-origin:50% 50%;transform:scaleX(0.985);">$20,0</div>
<div class="t" style="top:562px;font-size:11px;color:#fff;font-weight:bold;left:327.29999999999995px;width:400px;text-align:center;transform-origin:50% 50%;transform:scaleX(0.985);">$20,0</div>
<div class="t" style="top:562px;font-size:11px;color:#fff;font-weight:bold;left:392.29999999999995px;width:400px;text-align:center;transform-origin:50% 50%;transform:scaleX(0.985);">$95,0</div>
<div class="t" style="top:562px;font-size:11px;color:#fff;font-weight:bold;left:457.29999999999995px;width:400px;text-align:center;transform-origin:50% 50%;transform:scaleX(0.985);">$60,0</div>
<div class="t" style="top:562px;font-size:11px;color:#fff;font-weight:bold;left:522.3px;width:400px;text-align:center;transform-origin:50% 50%;transform:scaleX(0.985);">$70,0</div>
<div class="t" style="top:562px;font-size:11px;color:#fff;font-weight:bold;left:587.3px;width:400px;text-align:center;transform-origin:50% 50%;transform:scaleX(0.985);">$95,0</div>
<div class="t" style="top:562px;font-size:11px;color:#fff;font-weight:bold;left:652.3px;width:400px;text-align:center;transform-origin:50% 50%;transform:scaleX(0.985);">$65,0</div>
<div class="t" style="top:562px;font-size:11px;color:#fff;font-weight:bold;left:717.3px;width:400px;text-align:center;transform-origin:50% 50%;transform:scaleX(0.985);">$100,0</div>
<div class="t" style="top:562px;font-size:11px;color:#fff;font-weight:bold;left:782.3px;width:400px;text-align:center;transform-origin:50% 50%;transform:scaleX(0.985);">$90,0</div>
<div class="t" style="top:562px;font-size:11px;color:#fff;font-weight:bold;left:847.3px;width:400px;text-align:center;transform-origin:50% 50%;transform:scaleX(0.985);">$70,0</div>
<div class="t" style="top:562px;font-size:12.5px;color:#fff;font-weight:bold;left:917.8px;width:400px;text-align:center;transform-origin:50% 50%;transform:scaleX(1.020);">$765,0</div>
<div class="a" style="left:144px;top:597px;width:1014px;height:17px;background:#7f6000;"></div>
<div class="a" style="left:299px;top:597px;width:859px;height:1px;background:rgba(0,0,0,.55);"></div>
<div class="a" style="left:299px;top:597px;width:1px;height:18px;background:#000;"></div>
<div class="a" style="left:364px;top:597px;width:1px;height:18px;background:#000;"></div>
<div class="a" style="left:429px;top:597px;width:1px;height:18px;background:#000;"></div>
<div class="a" style="left:494px;top:597px;width:1px;height:18px;background:#000;"></div>
<div class="a" style="left:559px;top:597px;width:1px;height:18px;background:#000;"></div>
<div class="a" style="left:624px;top:597px;width:1px;height:18px;background:#000;"></div>
<div class="a" style="left:689px;top:597px;width:1px;height:18px;background:#000;"></div>
<div class="a" style="left:754px;top:597px;width:1px;height:18px;background:#000;"></div>
<div class="a" style="left:819px;top:597px;width:1px;height:18px;background:#000;"></div>
<div class="a" style="left:884px;top:597px;width:1px;height:18px;background:#000;"></div>
<div class="a" style="left:949px;top:597px;width:1px;height:18px;background:#000;"></div>
<div class="a" style="left:1014px;top:597px;width:1px;height:18px;background:#000;"></div>
<div class="a" style="left:1079px;top:597px;width:1px;height:18px;background:#000;"></div>
<div class="a" style="left:1157px;top:597px;width:1px;height:18px;background:#000;"></div>
<div class="a" style="left:299px;top:614px;width:66px;height:1px;background:#000;"></div>
<div class="t" style="top:596px;font-size:11px;color:#fff;font-weight:bold;left:147.7px;transform-origin:0 50%;transform:scaleX(0.917);">SAVINGS  / TOTAL</div>
<div class="t" style="top:596px;font-size:11px;color:#fff;font-weight:bold;left:132.3px;width:400px;text-align:center;transform-origin:50% 50%;transform:scaleX(0.985);">$275,0</div>
<div class="t" style="top:596px;font-size:11px;color:#fff;font-weight:bold;left:197.3px;width:400px;text-align:center;transform-origin:50% 50%;transform:scaleX(0.985);">$275,0</div>
<div class="t" style="top:596px;font-size:11px;color:#fff;font-weight:bold;left:262.3px;width:400px;text-align:center;transform-origin:50% 50%;transform:scaleX(0.985);">$875,0</div>
<div class="t" style="top:596px;font-size:11px;color:#fff;font-weight:bold;left:327.29999999999995px;width:400px;text-align:center;transform-origin:50% 50%;transform:scaleX(0.985);">$675,0</div>
<div class="t" style="top:596px;font-size:11px;color:#fff;font-weight:bold;left:392.29999999999995px;width:400px;text-align:center;transform-origin:50% 50%;transform:scaleX(0.985);">$675,0</div>
<div class="t" style="top:596px;font-size:11px;color:#fff;font-weight:bold;left:457.29999999999995px;width:400px;text-align:center;transform-origin:50% 50%;transform:scaleX(0.985);">$675,0</div>
<div class="t" style="top:596px;font-size:11px;color:#fff;font-weight:bold;left:522.3px;width:400px;text-align:center;transform-origin:50% 50%;transform:scaleX(0.985);">$875,0</div>
<div class="t" style="top:596px;font-size:11px;color:#fff;font-weight:bold;left:587.3px;width:400px;text-align:center;transform-origin:50% 50%;transform:scaleX(0.985);">$775,0</div>
<div class="t" style="top:596px;font-size:11px;color:#fff;font-weight:bold;left:652.3px;width:400px;text-align:center;transform-origin:50% 50%;transform:scaleX(0.985);">$775,0</div>
<div class="t" style="top:596px;font-size:11px;color:#fff;font-weight:bold;left:717.3px;width:400px;text-align:center;transform-origin:50% 50%;transform:scaleX(0.985);">$875,0</div>
<div class="t" style="top:596px;font-size:11px;color:#fff;font-weight:bold;left:782.3px;width:400px;text-align:center;transform-origin:50% 50%;transform:scaleX(0.985);">$275,0</div>
<div class="t" style="top:596px;font-size:11px;color:#fff;font-weight:bold;left:847.3px;width:400px;text-align:center;transform-origin:50% 50%;transform:scaleX(0.985);">$875,0</div>
<div class="t" style="top:596px;font-size:12.5px;color:#fff;font-weight:bold;left:917.8px;width:400px;text-align:center;transform-origin:50% 50%;transform:scaleX(1.020);">$7.900,0</div>
<div class="a" style="left:144px;top:631px;width:1014px;height:17px;background:#1f4e79;"></div>
<div class="a" style="left:299px;top:631px;width:859px;height:1px;background:rgba(0,0,0,.55);"></div>
<div class="a" style="left:299px;top:631px;width:1px;height:18px;background:#000;"></div>
<div class="a" style="left:364px;top:631px;width:1px;height:18px;background:#000;"></div>
<div class="a" style="left:429px;top:631px;width:1px;height:18px;background:#000;"></div>
<div class="a" style="left:494px;top:631px;width:1px;height:18px;background:#000;"></div>
<div class="a" style="left:559px;top:631px;width:1px;height:18px;background:#000;"></div>
<div class="a" style="left:624px;top:631px;width:1px;height:18px;background:#000;"></div>
<div class="a" style="left:689px;top:631px;width:1px;height:18px;background:#000;"></div>
<div class="a" style="left:754px;top:631px;width:1px;height:18px;background:#000;"></div>
<div class="a" style="left:819px;top:631px;width:1px;height:18px;background:#000;"></div>
<div class="a" style="left:884px;top:631px;width:1px;height:18px;background:#000;"></div>
<div class="a" style="left:949px;top:631px;width:1px;height:18px;background:#000;"></div>
<div class="a" style="left:1014px;top:631px;width:1px;height:18px;background:#000;"></div>
<div class="a" style="left:1079px;top:631px;width:1px;height:18px;background:#000;"></div>
<div class="a" style="left:1157px;top:631px;width:1px;height:18px;background:#000;"></div>
<div class="a" style="left:299px;top:648px;width:66px;height:1px;background:#000;"></div>
<div class="t" style="top:630px;font-size:11px;color:#fff;font-weight:bold;left:147.7px;transform-origin:0 50%;transform:scaleX(0.917);">OBLIGATIONS  / TOTAL</div>
<div class="t" style="top:630px;font-size:11px;color:#fff;font-weight:bold;left:132.3px;width:400px;text-align:center;transform-origin:50% 50%;transform:scaleX(0.985);">$1.065,0</div>
<div class="t" style="top:630px;font-size:11px;color:#fff;font-weight:bold;left:197.3px;width:400px;text-align:center;transform-origin:50% 50%;transform:scaleX(0.985);">$1.015,0</div>
<div class="t" style="top:630px;font-size:11px;color:#fff;font-weight:bold;left:262.3px;width:400px;text-align:center;transform-origin:50% 50%;transform:scaleX(0.985);">$1.065,0</div>
<div class="t" style="top:630px;font-size:11px;color:#fff;font-weight:bold;left:327.29999999999995px;width:400px;text-align:center;transform-origin:50% 50%;transform:scaleX(0.985);">$1.065,0</div>
<div class="t" style="top:630px;font-size:11px;color:#fff;font-weight:bold;left:392.29999999999995px;width:400px;text-align:center;transform-origin:50% 50%;transform:scaleX(0.985);">$915,0</div>
<div class="t" style="top:630px;font-size:11px;color:#fff;font-weight:bold;left:457.29999999999995px;width:400px;text-align:center;transform-origin:50% 50%;transform:scaleX(0.985);">$915,0</div>
<div class="t" style="top:630px;font-size:11px;color:#fff;font-weight:bold;left:522.3px;width:400px;text-align:center;transform-origin:50% 50%;transform:scaleX(0.985);">$1.065,0</div>
<div class="t" style="top:630px;font-size:11px;color:#fff;font-weight:bold;left:587.3px;width:400px;text-align:center;transform-origin:50% 50%;transform:scaleX(0.985);">$940,0</div>
<div class="t" style="top:630px;font-size:11px;color:#fff;font-weight:bold;left:652.3px;width:400px;text-align:center;transform-origin:50% 50%;transform:scaleX(0.985);">$940,0</div>
<div class="t" style="top:630px;font-size:11px;color:#fff;font-weight:bold;left:717.3px;width:400px;text-align:center;transform-origin:50% 50%;transform:scaleX(0.985);">$940,0</div>
<div class="t" style="top:630px;font-size:11px;color:#fff;font-weight:bold;left:782.3px;width:400px;text-align:center;transform-origin:50% 50%;transform:scaleX(0.985);">$1.065,0</div>
<div class="t" style="top:630px;font-size:11px;color:#fff;font-weight:bold;left:847.3px;width:400px;text-align:center;transform-origin:50% 50%;transform:scaleX(0.985);">$815,0</div>
<div class="t" style="top:630px;font-size:12.5px;color:#fff;font-weight:bold;left:917.8px;width:400px;text-align:center;transform-origin:50% 50%;transform:scaleX(1.020);">$11.805,0</div>
<div class="a" style="left:144px;top:665px;width:1014px;height:14px;background:#375623;"></div>
<div class="a" style="left:299px;top:665px;width:859px;height:1px;background:rgba(0,0,0,.55);"></div>
<div class="a" style="left:299px;top:665px;width:1px;height:14px;background:#000;"></div>
<div class="a" style="left:364px;top:665px;width:1px;height:14px;background:#000;"></div>
<div class="a" style="left:429px;top:665px;width:1px;height:14px;background:#000;"></div>
<div class="a" style="left:494px;top:665px;width:1px;height:14px;background:#000;"></div>
<div class="a" style="left:559px;top:665px;width:1px;height:14px;background:#000;"></div>
<div class="a" style="left:624px;top:665px;width:1px;height:14px;background:#000;"></div>
<div class="a" style="left:689px;top:665px;width:1px;height:14px;background:#000;"></div>
<div class="a" style="left:754px;top:665px;width:1px;height:14px;background:#000;"></div>
<div class="a" style="left:819px;top:665px;width:1px;height:14px;background:#000;"></div>
<div class="a" style="left:884px;top:665px;width:1px;height:14px;background:#000;"></div>
<div class="a" style="left:949px;top:665px;width:1px;height:14px;background:#000;"></div>
<div class="a" style="left:1014px;top:665px;width:1px;height:14px;background:#000;"></div>
<div class="a" style="left:1079px;top:665px;width:1px;height:14px;background:#000;"></div>
<div class="a" style="left:1157px;top:665px;width:1px;height:14px;background:#000;"></div>
<div class="t" style="top:664px;font-size:11px;color:#fff;font-weight:bold;left:147.7px;transform-origin:0 50%;transform:scaleX(0.917);">BUSINESS EXPENSE  / TOTAL</div>
<div class="t" style="top:664px;font-size:11px;color:#fff;font-weight:bold;left:132.3px;width:400px;text-align:center;transform-origin:50% 50%;transform:scaleX(0.985);">$20,0</div>
<div class="t" style="top:664px;font-size:11px;color:#fff;font-weight:bold;left:197.3px;width:400px;text-align:center;transform-origin:50% 50%;transform:scaleX(0.985);">$20,0</div>
<div class="t" style="top:664px;font-size:11px;color:#fff;font-weight:bold;left:262.3px;width:400px;text-align:center;transform-origin:50% 50%;transform:scaleX(0.985);">$40,0</div>
<div class="t" style="top:664px;font-size:11px;color:#fff;font-weight:bold;left:327.29999999999995px;width:400px;text-align:center;transform-origin:50% 50%;transform:scaleX(0.985);">$40,0</div>
<div class="t" style="top:664px;font-size:11px;color:#fff;font-weight:bold;left:392.29999999999995px;width:400px;text-align:center;transform-origin:50% 50%;transform:scaleX(0.985);">$40,0</div>
<div class="t" style="top:664px;font-size:11px;color:#fff;font-weight:bold;left:457.29999999999995px;width:400px;text-align:center;transform-origin:50% 50%;transform:scaleX(0.985);">$10,0</div>
<div class="t" style="top:664px;font-size:11px;color:#fff;font-weight:bold;left:522.3px;width:400px;text-align:center;transform-origin:50% 50%;transform:scaleX(0.985);">$10,0</div>
<div class="t" style="top:664px;font-size:11px;color:#fff;font-weight:bold;left:587.3px;width:400px;text-align:center;transform-origin:50% 50%;transform:scaleX(0.985);">$40,0</div>
<div class="t" style="top:664px;font-size:11px;color:#fff;font-weight:bold;left:652.3px;width:400px;text-align:center;transform-origin:50% 50%;transform:scaleX(0.985);">$40,0</div>
<div class="t" style="top:664px;font-size:11px;color:#fff;font-weight:bold;left:717.3px;width:400px;text-align:center;transform-origin:50% 50%;transform:scaleX(0.985);">$40,0</div>
<div class="t" style="top:664px;font-size:11px;color:#fff;font-weight:bold;left:782.3px;width:400px;text-align:center;transform-origin:50% 50%;transform:scaleX(0.985);">$40,0</div>
<div class="t" style="top:664px;font-size:11px;color:#fff;font-weight:bold;left:847.3px;width:400px;text-align:center;transform-origin:50% 50%;transform:scaleX(0.985);">$40,0</div>
<div class="t" style="top:664px;font-size:12.5px;color:#fff;font-weight:bold;left:917.8px;width:400px;text-align:center;transform-origin:50% 50%;transform:scaleX(1.020);">$380,0</div>
<div class="a" style="left:0px;top:679px;width:1365px;height:21px;background:#f1f1f1;"></div>
<div class="a" style="left:0px;top:679px;width:1365px;height:1px;background:#c8c8c8;"></div>
<div class="t" style="top:681px;font-size:12px;color:#444;left:7px;transform-origin:0 50%;transform:scaleX(0.894);">Ready</div>
<div class="a" style="left:1080px;top:680px;width:38px;height:20px;background:#c8c8c8;"></div>
<svg class="a" style="left:1092px;top:683px" width="14" height="13" viewBox="0 0 14 13"><g fill="none" stroke="#666"><rect x="0.5" y="0.5" width="12" height="12"/><path d="M4.500 0.500V12.500M8.500 0.500V12.500M0.500 4.500H12.500M0.500 8.500H12.500"/></g></svg>
<svg class="a" style="left:1130px;top:683px" width="14" height="13" viewBox="0 0 14 13"><g fill="none" stroke="#666"><rect x="0.5" y="0.5" width="13" height="12"/><rect x="3.500" y="3.500" width="7" height="7"/><path d="M5 5H9M5 7H9M5 9H9" stroke-width="0.900"/></g></svg>
<svg class="a" style="left:1168px;top:683px" width="15" height="13" viewBox="0 0 15 13"><g fill="none" stroke="#666"><path d="M0.500 0.500H13.500V12.500H0.500Z"/><path d="M4.500 0.500V7.500M8.500 0.500V7.500M0.500 7.500H8.500" stroke-width="1.100"/></g></svg>
<div class="a" style="left:1199px;top:689px;width:7px;height:2px;background:#555;"></div>
<div class="a" style="left:1209px;top:689px;width:101px;height:1px;background:#a5a5a5;"></div>
<div class="a" style="left:1259px;top:686px;width:1px;height:7px;background:#a5a5a5;"></div>
<div class="a" style="left:1249px;top:684px;width:4px;height:11px;background:#5a5a5a;"></div>
<div class="a" style="left:1313px;top:689px;width:9px;height:2px;background:#555;"></div>
<div class="a" style="left:1316.5px;top:685.5px;width:2px;height:9px;background:#555;"></div>
<div class="t" style="top:681px;font-size:12px;color:#555;left:1335.5px;transform-origin:0 50%;transform:scaleX(0.895);">%85</div>
</body></html>
